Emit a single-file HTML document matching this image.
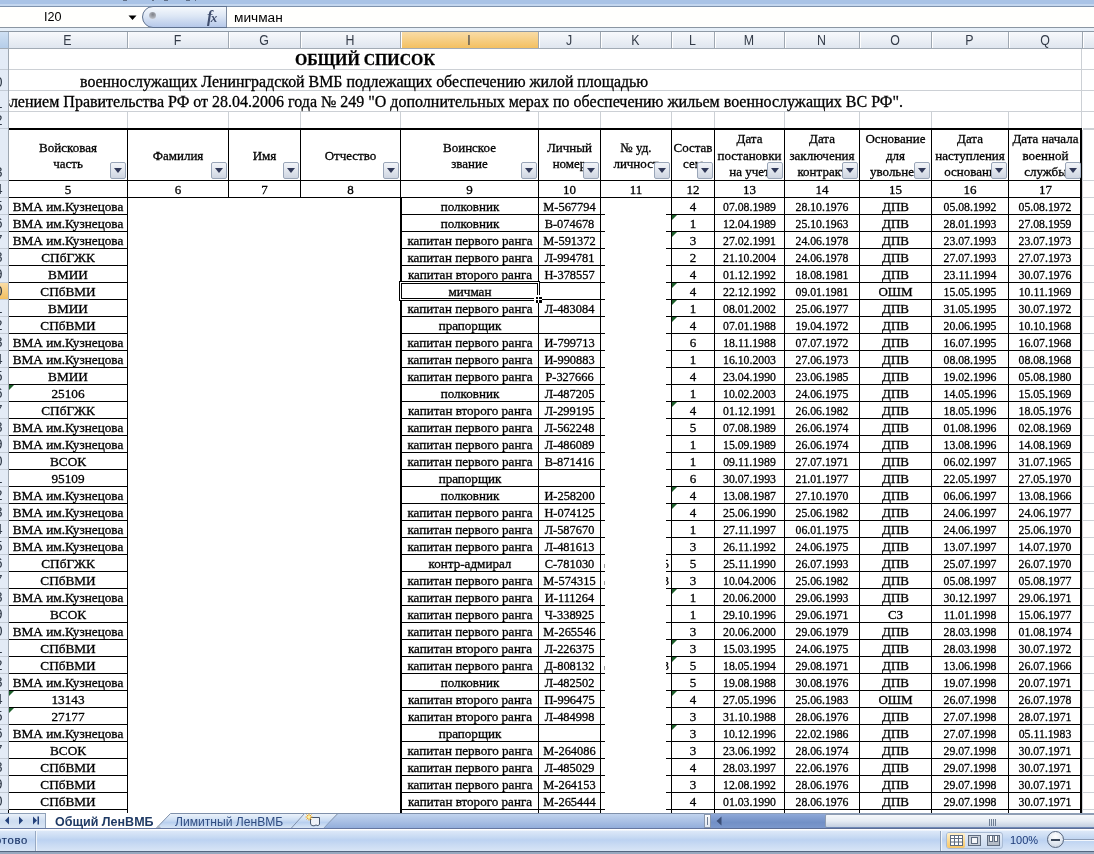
<!DOCTYPE html>
<html><head><meta charset="utf-8"><style>
html,body{margin:0;padding:0;width:1094px;height:854px;overflow:hidden;background:#fff;position:relative}
#root{position:absolute;left:0;top:0;width:1094px;height:854px;overflow:hidden;will-change:transform}
div,svg{position:absolute;box-sizing:border-box}
.serif{font-family:"Liberation Serif",serif;color:#000;white-space:nowrap;overflow:hidden;-webkit-text-stroke:0.3px #000}
.sans{font-family:"Liberation Sans",sans-serif;white-space:nowrap}
.hdr{text-align:center;white-space:nowrap;overflow:hidden}
.fbtn{width:16px;height:17px;border:1px solid #9aa6b8;border-radius:2px;background:linear-gradient(#f3f5f9,#cfd6e2)}
.fbtn::after{content:"";position:absolute;left:3px;top:5px;border-left:4.5px solid transparent;border-right:4.5px solid transparent;border-top:5px solid #303858}
.tri{width:0;height:0;border-top:5px solid #1d5f2b;border-right:5px solid transparent}
</style></head><body><div id="root">
<div style="left:0px;top:0px;width:1094px;height:4px;background:#a9c3e6"></div>
<div style="left:0px;top:4px;width:1094px;height:2px;background:#c3d6ee"></div>
<div style="left:0px;top:6px;width:1094px;height:1px;background:#7f93ad"></div>
<div style="left:0px;top:7px;width:1094px;height:20px;background:#fffffd"></div>
<div style="left:0px;top:27px;width:1094px;height:1px;background:#8b96a2"></div>
<div style="left:0px;top:28px;width:1094px;height:3px;background:#e6eff8"></div>
<div style="left:0px;top:31px;width:1094px;height:1px;background:#8e99a5"></div>
<div style="left:123px;top:0px;width:4px;height:1px;background:#5f6f88"></div>
<div style="left:152px;top:0px;width:2px;height:1px;background:#5f6f88"></div>
<div style="left:164px;top:0px;width:4px;height:1px;background:#5f6f88"></div>
<div style="left:186px;top:0px;width:4px;height:1px;background:#5f6f88"></div>
<div style="left:195px;top:0px;width:1px;height:1px;background:#5f6f88"></div>
<div class="sans" style="left:44px;top:7px;width:40px;height:20px;line-height:20px;font-size:12.6px;text-align:left;color:#000">I20</div>
<svg style="left:128px;top:15px;width:10px;height:6px" width="10" height="6"><path d="M0.5 0.5 L8.5 0.5 L4.5 5 Z" fill="#000"/></svg>
<svg style="left:141px;top:6px;width:86px;height:22px" width="86" height="22"><defs><linearGradient id="pg" x1="0" y1="0" x2="0" y2="1"><stop offset="0" stop-color="#f7fafd"/><stop offset="0.45" stop-color="#dde7f5"/><stop offset="1" stop-color="#b4c7e9"/></linearGradient></defs><path d="M12 0.5 H86 V21.5 H12 A10.5 10.5 0 0 1 12 0.5 Z" fill="url(#pg)" stroke="#5f7290" stroke-width="1"/></svg>
<div style="left:149px;top:12px;width:7px;height:7px;border-radius:50%;background:radial-gradient(circle at 55% 35%,#7d8088,#b0b4bc 60%,#e6e9ee)"></div>
<div style="left:226px;top:7px;width:1px;height:20px;background:#7d8ba0"></div>
<div class="serif" style="left:207px;top:7px;width:20px;height:20px;line-height:20px;font-size:16px;font-style:italic;font-weight:bold;color:#3f4d6d;-webkit-text-stroke:0">f<span style="font-size:13px;position:relative;left:-1.5px">x</span></div>
<div class="sans" style="left:234px;top:8px;width:200px;height:20px;line-height:20px;font-size:13.7px;color:#000">мичман</div>
<div style="left:0px;top:32px;width:1094px;height:16px;background:linear-gradient(#f7f9fc,#dfe6ef)"></div>
<div style="left:400px;top:32px;width:138px;height:16px;background:linear-gradient(#f9dca6,#f3c061)"></div>
<div style="left:0px;top:48px;width:1094px;height:1px;background:#a2abb5"></div>
<div style="left:0px;top:32px;width:8px;height:16px;background:linear-gradient(#cfe0f3,#b5cde9)"></div>
<div style="left:8px;top:32px;width:1px;height:16px;background:#9eb0c5"></div>
<div style="left:127px;top:32px;width:1px;height:16px;background:#9ea7b1"></div>
<div style="left:128px;top:32px;width:1px;height:16px;background:#ffffff"></div>
<div class="sans" style="left:8px;top:32px;width:119px;height:16px;line-height:16px;font-size:14.4px;text-align:center;color:#333b48;transform:scaleX(0.86)">E</div>
<div style="left:228px;top:32px;width:1px;height:16px;background:#9ea7b1"></div>
<div style="left:229px;top:32px;width:1px;height:16px;background:#ffffff"></div>
<div class="sans" style="left:127px;top:32px;width:101px;height:16px;line-height:16px;font-size:14.4px;text-align:center;color:#333b48;transform:scaleX(0.86)">F</div>
<div style="left:300px;top:32px;width:1px;height:16px;background:#9ea7b1"></div>
<div style="left:301px;top:32px;width:1px;height:16px;background:#ffffff"></div>
<div class="sans" style="left:228px;top:32px;width:72px;height:16px;line-height:16px;font-size:14.4px;text-align:center;color:#333b48;transform:scaleX(0.86)">G</div>
<div style="left:400px;top:32px;width:1px;height:16px;background:#9ea7b1"></div>
<div style="left:401px;top:32px;width:1px;height:16px;background:#ffffff"></div>
<div class="sans" style="left:300px;top:32px;width:100px;height:16px;line-height:16px;font-size:14.4px;text-align:center;color:#333b48;transform:scaleX(0.86)">H</div>
<div style="left:538px;top:32px;width:1px;height:16px;background:#9ea7b1"></div>
<div style="left:539px;top:32px;width:1px;height:16px;background:#ffffff"></div>
<div class="sans" style="left:400px;top:32px;width:138px;height:16px;line-height:16px;font-size:14.4px;text-align:center;color:#333b48;transform:scaleX(0.86)">I</div>
<div style="left:600px;top:32px;width:1px;height:16px;background:#9ea7b1"></div>
<div style="left:601px;top:32px;width:1px;height:16px;background:#ffffff"></div>
<div class="sans" style="left:538px;top:32px;width:62px;height:16px;line-height:16px;font-size:14.4px;text-align:center;color:#333b48;transform:scaleX(0.86)">J</div>
<div style="left:671px;top:32px;width:1px;height:16px;background:#9ea7b1"></div>
<div style="left:672px;top:32px;width:1px;height:16px;background:#ffffff"></div>
<div class="sans" style="left:600px;top:32px;width:71px;height:16px;line-height:16px;font-size:14.4px;text-align:center;color:#333b48;transform:scaleX(0.86)">K</div>
<div style="left:714px;top:32px;width:1px;height:16px;background:#9ea7b1"></div>
<div style="left:715px;top:32px;width:1px;height:16px;background:#ffffff"></div>
<div class="sans" style="left:671px;top:32px;width:43px;height:16px;line-height:16px;font-size:14.4px;text-align:center;color:#333b48;transform:scaleX(0.86)">L</div>
<div style="left:784px;top:32px;width:1px;height:16px;background:#9ea7b1"></div>
<div style="left:785px;top:32px;width:1px;height:16px;background:#ffffff"></div>
<div class="sans" style="left:714px;top:32px;width:70px;height:16px;line-height:16px;font-size:14.4px;text-align:center;color:#333b48;transform:scaleX(0.86)">M</div>
<div style="left:859px;top:32px;width:1px;height:16px;background:#9ea7b1"></div>
<div style="left:860px;top:32px;width:1px;height:16px;background:#ffffff"></div>
<div class="sans" style="left:784px;top:32px;width:75px;height:16px;line-height:16px;font-size:14.4px;text-align:center;color:#333b48;transform:scaleX(0.86)">N</div>
<div style="left:931px;top:32px;width:1px;height:16px;background:#9ea7b1"></div>
<div style="left:932px;top:32px;width:1px;height:16px;background:#ffffff"></div>
<div class="sans" style="left:859px;top:32px;width:72px;height:16px;line-height:16px;font-size:14.4px;text-align:center;color:#333b48;transform:scaleX(0.86)">O</div>
<div style="left:1008px;top:32px;width:1px;height:16px;background:#9ea7b1"></div>
<div style="left:1009px;top:32px;width:1px;height:16px;background:#ffffff"></div>
<div class="sans" style="left:931px;top:32px;width:77px;height:16px;line-height:16px;font-size:14.4px;text-align:center;color:#333b48;transform:scaleX(0.86)">P</div>
<div style="left:1082px;top:32px;width:1px;height:16px;background:#9ea7b1"></div>
<div style="left:1083px;top:32px;width:1px;height:16px;background:#ffffff"></div>
<div class="sans" style="left:1008px;top:32px;width:74px;height:16px;line-height:16px;font-size:14.4px;text-align:center;color:#333b48;transform:scaleX(0.86)">Q</div>
<div style="left:9px;top:69px;width:1085px;height:1px;background:#ccd0d5"></div>
<div style="left:9px;top:90px;width:1085px;height:1px;background:#ccd0d5"></div>
<div style="left:9px;top:111px;width:1085px;height:1px;background:#ccd0d5"></div>
<div style="left:127px;top:112px;width:1px;height:16px;background:#ccd0d5"></div>
<div style="left:228px;top:112px;width:1px;height:16px;background:#ccd0d5"></div>
<div style="left:300px;top:112px;width:1px;height:16px;background:#ccd0d5"></div>
<div style="left:400px;top:112px;width:1px;height:16px;background:#ccd0d5"></div>
<div style="left:538px;top:112px;width:1px;height:16px;background:#ccd0d5"></div>
<div style="left:600px;top:112px;width:1px;height:16px;background:#ccd0d5"></div>
<div style="left:671px;top:112px;width:1px;height:16px;background:#ccd0d5"></div>
<div style="left:714px;top:112px;width:1px;height:16px;background:#ccd0d5"></div>
<div style="left:784px;top:112px;width:1px;height:16px;background:#ccd0d5"></div>
<div style="left:859px;top:112px;width:1px;height:16px;background:#ccd0d5"></div>
<div style="left:931px;top:112px;width:1px;height:16px;background:#ccd0d5"></div>
<div style="left:1008px;top:112px;width:1px;height:16px;background:#ccd0d5"></div>
<div style="left:1081px;top:49px;width:1px;height:79px;background:#ccd0d5"></div>
<div style="left:1082px;top:130px;width:1px;height:683px;background:#ccd0d5"></div>
<div style="left:1083px;top:128px;width:11px;height:1px;background:#ccd0d5"></div>
<div style="left:1083px;top:129px;width:11px;height:1px;background:#ccd0d5"></div>
<div style="left:1083px;top:180px;width:11px;height:1px;background:#ccd0d5"></div>
<div style="left:1083px;top:197px;width:11px;height:1px;background:#ccd0d5"></div>
<div style="left:1083px;top:214px;width:11px;height:1px;background:#ccd0d5"></div>
<div style="left:1083px;top:231px;width:11px;height:1px;background:#ccd0d5"></div>
<div style="left:1083px;top:248px;width:11px;height:1px;background:#ccd0d5"></div>
<div style="left:1083px;top:265px;width:11px;height:1px;background:#ccd0d5"></div>
<div style="left:1083px;top:282px;width:11px;height:1px;background:#ccd0d5"></div>
<div style="left:1083px;top:299px;width:11px;height:1px;background:#ccd0d5"></div>
<div style="left:1083px;top:316px;width:11px;height:1px;background:#ccd0d5"></div>
<div style="left:1083px;top:333px;width:11px;height:1px;background:#ccd0d5"></div>
<div style="left:1083px;top:350px;width:11px;height:1px;background:#ccd0d5"></div>
<div style="left:1083px;top:367px;width:11px;height:1px;background:#ccd0d5"></div>
<div style="left:1083px;top:384px;width:11px;height:1px;background:#ccd0d5"></div>
<div style="left:1083px;top:401px;width:11px;height:1px;background:#ccd0d5"></div>
<div style="left:1083px;top:418px;width:11px;height:1px;background:#ccd0d5"></div>
<div style="left:1083px;top:435px;width:11px;height:1px;background:#ccd0d5"></div>
<div style="left:1083px;top:452px;width:11px;height:1px;background:#ccd0d5"></div>
<div style="left:1083px;top:469px;width:11px;height:1px;background:#ccd0d5"></div>
<div style="left:1083px;top:486px;width:11px;height:1px;background:#ccd0d5"></div>
<div style="left:1083px;top:503px;width:11px;height:1px;background:#ccd0d5"></div>
<div style="left:1083px;top:520px;width:11px;height:1px;background:#ccd0d5"></div>
<div style="left:1083px;top:537px;width:11px;height:1px;background:#ccd0d5"></div>
<div style="left:1083px;top:554px;width:11px;height:1px;background:#ccd0d5"></div>
<div style="left:1083px;top:571px;width:11px;height:1px;background:#ccd0d5"></div>
<div style="left:1083px;top:588px;width:11px;height:1px;background:#ccd0d5"></div>
<div style="left:1083px;top:605px;width:11px;height:1px;background:#ccd0d5"></div>
<div style="left:1083px;top:622px;width:11px;height:1px;background:#ccd0d5"></div>
<div style="left:1083px;top:639px;width:11px;height:1px;background:#ccd0d5"></div>
<div style="left:1083px;top:656px;width:11px;height:1px;background:#ccd0d5"></div>
<div style="left:1083px;top:673px;width:11px;height:1px;background:#ccd0d5"></div>
<div style="left:1083px;top:690px;width:11px;height:1px;background:#ccd0d5"></div>
<div style="left:1083px;top:707px;width:11px;height:1px;background:#ccd0d5"></div>
<div style="left:1083px;top:724px;width:11px;height:1px;background:#ccd0d5"></div>
<div style="left:1083px;top:741px;width:11px;height:1px;background:#ccd0d5"></div>
<div style="left:1083px;top:758px;width:11px;height:1px;background:#ccd0d5"></div>
<div style="left:1083px;top:775px;width:11px;height:1px;background:#ccd0d5"></div>
<div style="left:1083px;top:792px;width:11px;height:1px;background:#ccd0d5"></div>
<div style="left:1083px;top:809px;width:11px;height:1px;background:#ccd0d5"></div>
<div class="serif" style="left:295px;top:50px;width:200px;height:20px;line-height:20px;font-size:17px;font-weight:bold;text-align:left;transform:scaleX(0.93);transform-origin:0 50%">ОБЩИЙ СПИСОК</div>
<div class="serif" style="left:80px;top:71.5px;width:700px;height:20px;line-height:20px;font-size:15.9px;text-align:left">военнослужащих Ленинградской ВМБ подлежащих обеспечению жилой площадью</div>
<div class="serif" style="left:-200px;top:91px;width:1300px;height:20px;line-height:20px;font-size:16px;text-align:right;width:1103px;left:-200px;top:92px">в соответствии с постановлением Правительства РФ от 28.04.2006 года № 249 "О дополнительных мерах по обеспечению жильем военнослужащих ВС РФ".</div>
<div style="left:8px;top:128px;width:1074px;height:2px;background:#000"></div>
<div style="left:8px;top:180px;width:1074px;height:1px;background:#000"></div>
<div style="left:8px;top:197px;width:1074px;height:1px;background:#000"></div>
<div style="left:8px;top:130px;width:1px;height:67px;background:#000"></div>
<div style="left:127px;top:130px;width:1px;height:67px;background:#000"></div>
<div style="left:228px;top:130px;width:1px;height:67px;background:#000"></div>
<div style="left:300px;top:130px;width:1px;height:67px;background:#000"></div>
<div style="left:400px;top:130px;width:1px;height:67px;background:#000"></div>
<div style="left:538px;top:130px;width:1px;height:67px;background:#000"></div>
<div style="left:600px;top:130px;width:1px;height:67px;background:#000"></div>
<div style="left:671px;top:130px;width:1px;height:67px;background:#000"></div>
<div style="left:714px;top:130px;width:1px;height:67px;background:#000"></div>
<div style="left:784px;top:130px;width:1px;height:67px;background:#000"></div>
<div style="left:859px;top:130px;width:1px;height:67px;background:#000"></div>
<div style="left:931px;top:130px;width:1px;height:67px;background:#000"></div>
<div style="left:1008px;top:130px;width:1px;height:67px;background:#000"></div>
<div style="left:1080px;top:128px;width:2px;height:685px;background:#000"></div>
<div class="serif hdr" style="left:9px;top:139.5px;width:118px;line-height:16.5px;font-size:13px">Войсковая<br>часть</div>
<div class="fbtn" style="left:110px;top:162px"></div>
<div class="serif hdr" style="left:128px;top:147.75px;width:100px;line-height:16.5px;font-size:13px">Фамилия</div>
<div class="fbtn" style="left:211px;top:162px"></div>
<div class="serif hdr" style="left:229px;top:147.75px;width:71px;line-height:16.5px;font-size:13px">Имя</div>
<div class="fbtn" style="left:283px;top:162px"></div>
<div class="serif hdr" style="left:301px;top:147.75px;width:99px;line-height:16.5px;font-size:13px">Отчество</div>
<div class="fbtn" style="left:383px;top:162px"></div>
<div class="serif hdr" style="left:401px;top:139.5px;width:137px;line-height:16.5px;font-size:13px">Воинское<br>звание</div>
<div class="fbtn" style="left:521px;top:162px"></div>
<div class="serif hdr" style="left:539px;top:139.5px;width:61px;line-height:16.5px;font-size:13px">Личный<br>номер</div>
<div class="fbtn" style="left:583px;top:162px"></div>
<div class="serif hdr" style="left:601px;top:139.5px;width:70px;line-height:16.5px;font-size:13px">№ уд.<br>личност</div>
<div class="fbtn" style="left:654px;top:162px"></div>
<div class="serif hdr" style="left:672px;top:139.5px;width:42px;line-height:16.5px;font-size:13px">Состав<br>сем</div>
<div class="fbtn" style="left:697px;top:162px"></div>
<div class="serif hdr" style="left:715px;top:131.25px;width:69px;line-height:16.5px;font-size:13px">Дата<br>постановки<br>на учет</div>
<div class="fbtn" style="left:767px;top:162px"></div>
<div class="serif hdr" style="left:785px;top:131.25px;width:74px;line-height:16.5px;font-size:13px">Дата<br>заключения<br>контракт</div>
<div class="fbtn" style="left:842px;top:162px"></div>
<div class="serif hdr" style="left:860px;top:131.25px;width:71px;line-height:16.5px;font-size:13px">Основание<br>для<br>увольнен</div>
<div class="fbtn" style="left:914px;top:162px"></div>
<div class="serif hdr" style="left:932px;top:131.25px;width:76px;line-height:16.5px;font-size:13px">Дата<br>наступления<br>основани</div>
<div class="fbtn" style="left:991px;top:162px"></div>
<div class="serif hdr" style="left:1009px;top:131.25px;width:73px;line-height:16.5px;font-size:13px">Дата начала<br>военной<br>службы</div>
<div class="fbtn" style="left:1065px;top:162px"></div>
<div class="serif" style="left:9px;top:182px;width:118px;height:16px;line-height:16px;font-size:13px;text-align:center">5</div>
<div class="serif" style="left:128px;top:182px;width:100px;height:16px;line-height:16px;font-size:13px;text-align:center">6</div>
<div class="serif" style="left:229px;top:182px;width:71px;height:16px;line-height:16px;font-size:13px;text-align:center">7</div>
<div class="serif" style="left:301px;top:182px;width:99px;height:16px;line-height:16px;font-size:13px;text-align:center">8</div>
<div class="serif" style="left:401px;top:182px;width:137px;height:16px;line-height:16px;font-size:13px;text-align:center">9</div>
<div class="serif" style="left:539px;top:182px;width:61px;height:16px;line-height:16px;font-size:13px;text-align:center">10</div>
<div class="serif" style="left:601px;top:182px;width:70px;height:16px;line-height:16px;font-size:13px;text-align:center">11</div>
<div class="serif" style="left:672px;top:182px;width:42px;height:16px;line-height:16px;font-size:13px;text-align:center">12</div>
<div class="serif" style="left:715px;top:182px;width:69px;height:16px;line-height:16px;font-size:13px;text-align:center">13</div>
<div class="serif" style="left:785px;top:182px;width:74px;height:16px;line-height:16px;font-size:13px;text-align:center">14</div>
<div class="serif" style="left:860px;top:182px;width:71px;height:16px;line-height:16px;font-size:13px;text-align:center">15</div>
<div class="serif" style="left:932px;top:182px;width:76px;height:16px;line-height:16px;font-size:13px;text-align:center">16</div>
<div class="serif" style="left:1009px;top:182px;width:73px;height:16px;line-height:16px;font-size:13px;text-align:center">17</div>
<div style="left:8px;top:214px;width:119px;height:1px;background:#000"></div>
<div style="left:400px;top:214px;width:205px;height:1px;background:#000"></div>
<div style="left:666px;top:214px;width:416px;height:1px;background:#000"></div>
<div class="serif" style="left:9px;top:199px;width:118px;height:16px;line-height:16px;font-size:13.25px;text-align:center">ВМА им.Кузнецова</div>
<div class="serif" style="left:402px;top:199px;width:136px;height:16px;line-height:16px;font-size:13.1px;text-align:center">полковник</div>
<div class="serif" style="left:539px;top:199px;width:61px;height:16px;line-height:16px;font-size:12.4px;text-align:center">М-567794</div>
<div class="serif" style="left:672px;top:199px;width:42px;height:16px;line-height:16px;font-size:13px;text-align:center">4</div>
<div class="serif" style="left:715px;top:199px;width:69px;height:16px;line-height:16px;font-size:13px;text-align:center;transform:scaleX(0.906)">07.08.1989</div>
<div class="serif" style="left:785px;top:199px;width:74px;height:16px;line-height:16px;font-size:13px;text-align:center;transform:scaleX(0.906)">28.10.1976</div>
<div class="serif" style="left:860px;top:199px;width:71px;height:16px;line-height:16px;font-size:13px;text-align:center">ДПВ</div>
<div class="serif" style="left:932px;top:199px;width:76px;height:16px;line-height:16px;font-size:13px;text-align:center;transform:scaleX(0.906)">05.08.1992</div>
<div class="serif" style="left:1009px;top:199px;width:72px;height:16px;line-height:16px;font-size:13px;text-align:center;transform:scaleX(0.906)">05.08.1972</div>
<div style="left:8px;top:231px;width:119px;height:1px;background:#000"></div>
<div style="left:400px;top:231px;width:205px;height:1px;background:#000"></div>
<div style="left:666px;top:231px;width:416px;height:1px;background:#000"></div>
<div class="serif" style="left:9px;top:216px;width:118px;height:16px;line-height:16px;font-size:13.25px;text-align:center">ВМА им.Кузнецова</div>
<div class="serif" style="left:402px;top:216px;width:136px;height:16px;line-height:16px;font-size:13.1px;text-align:center">полковник</div>
<div class="serif" style="left:539px;top:216px;width:61px;height:16px;line-height:16px;font-size:12.4px;text-align:center">В-074678</div>
<div class="serif" style="left:672px;top:216px;width:42px;height:16px;line-height:16px;font-size:13px;text-align:center">1</div>
<div class="serif" style="left:715px;top:216px;width:69px;height:16px;line-height:16px;font-size:13px;text-align:center;transform:scaleX(0.906)">12.04.1989</div>
<div class="serif" style="left:785px;top:216px;width:74px;height:16px;line-height:16px;font-size:13px;text-align:center;transform:scaleX(0.906)">25.10.1963</div>
<div class="serif" style="left:860px;top:216px;width:71px;height:16px;line-height:16px;font-size:13px;text-align:center">ДПВ</div>
<div class="serif" style="left:932px;top:216px;width:76px;height:16px;line-height:16px;font-size:13px;text-align:center;transform:scaleX(0.906)">28.01.1993</div>
<div class="serif" style="left:1009px;top:216px;width:72px;height:16px;line-height:16px;font-size:13px;text-align:center;transform:scaleX(0.906)">27.08.1959</div>
<div class="tri" style="left:672px;top:215px"></div>
<div style="left:8px;top:248px;width:119px;height:1px;background:#000"></div>
<div style="left:400px;top:248px;width:205px;height:1px;background:#000"></div>
<div style="left:666px;top:248px;width:416px;height:1px;background:#000"></div>
<div class="serif" style="left:9px;top:233px;width:118px;height:16px;line-height:16px;font-size:13.25px;text-align:center">ВМА им.Кузнецова</div>
<div class="serif" style="left:402px;top:233px;width:136px;height:16px;line-height:16px;font-size:13.1px;text-align:center">капитан первого ранга</div>
<div class="serif" style="left:539px;top:233px;width:61px;height:16px;line-height:16px;font-size:12.4px;text-align:center">М-591372</div>
<div class="serif" style="left:672px;top:233px;width:42px;height:16px;line-height:16px;font-size:13px;text-align:center">3</div>
<div class="serif" style="left:715px;top:233px;width:69px;height:16px;line-height:16px;font-size:13px;text-align:center;transform:scaleX(0.906)">27.02.1991</div>
<div class="serif" style="left:785px;top:233px;width:74px;height:16px;line-height:16px;font-size:13px;text-align:center;transform:scaleX(0.906)">24.06.1978</div>
<div class="serif" style="left:860px;top:233px;width:71px;height:16px;line-height:16px;font-size:13px;text-align:center">ДПВ</div>
<div class="serif" style="left:932px;top:233px;width:76px;height:16px;line-height:16px;font-size:13px;text-align:center;transform:scaleX(0.906)">23.07.1993</div>
<div class="serif" style="left:1009px;top:233px;width:72px;height:16px;line-height:16px;font-size:13px;text-align:center;transform:scaleX(0.906)">23.07.1973</div>
<div class="tri" style="left:672px;top:232px"></div>
<div style="left:8px;top:265px;width:119px;height:1px;background:#000"></div>
<div style="left:400px;top:265px;width:205px;height:1px;background:#000"></div>
<div style="left:666px;top:265px;width:416px;height:1px;background:#000"></div>
<div class="serif" style="left:9px;top:250px;width:118px;height:16px;line-height:16px;font-size:13.25px;text-align:center">СПбГЖК</div>
<div class="serif" style="left:402px;top:250px;width:136px;height:16px;line-height:16px;font-size:13.1px;text-align:center">капитан первого ранга</div>
<div class="serif" style="left:539px;top:250px;width:61px;height:16px;line-height:16px;font-size:12.4px;text-align:center">Л-994781</div>
<div class="serif" style="left:672px;top:250px;width:42px;height:16px;line-height:16px;font-size:13px;text-align:center">2</div>
<div class="serif" style="left:715px;top:250px;width:69px;height:16px;line-height:16px;font-size:13px;text-align:center;transform:scaleX(0.906)">21.10.2004</div>
<div class="serif" style="left:785px;top:250px;width:74px;height:16px;line-height:16px;font-size:13px;text-align:center;transform:scaleX(0.906)">24.06.1978</div>
<div class="serif" style="left:860px;top:250px;width:71px;height:16px;line-height:16px;font-size:13px;text-align:center">ДПВ</div>
<div class="serif" style="left:932px;top:250px;width:76px;height:16px;line-height:16px;font-size:13px;text-align:center;transform:scaleX(0.906)">27.07.1993</div>
<div class="serif" style="left:1009px;top:250px;width:72px;height:16px;line-height:16px;font-size:13px;text-align:center;transform:scaleX(0.906)">27.07.1973</div>
<div style="left:8px;top:282px;width:119px;height:1px;background:#000"></div>
<div style="left:400px;top:282px;width:205px;height:1px;background:#000"></div>
<div style="left:666px;top:282px;width:416px;height:1px;background:#000"></div>
<div class="serif" style="left:9px;top:267px;width:118px;height:16px;line-height:16px;font-size:13.25px;text-align:center">ВМИИ</div>
<div class="serif" style="left:402px;top:267px;width:136px;height:16px;line-height:16px;font-size:13.1px;text-align:center">капитан второго ранга</div>
<div class="serif" style="left:539px;top:267px;width:61px;height:16px;line-height:16px;font-size:12.4px;text-align:center">Н-378557</div>
<div class="serif" style="left:672px;top:267px;width:42px;height:16px;line-height:16px;font-size:13px;text-align:center">4</div>
<div class="serif" style="left:715px;top:267px;width:69px;height:16px;line-height:16px;font-size:13px;text-align:center;transform:scaleX(0.906)">01.12.1992</div>
<div class="serif" style="left:785px;top:267px;width:74px;height:16px;line-height:16px;font-size:13px;text-align:center;transform:scaleX(0.906)">18.08.1981</div>
<div class="serif" style="left:860px;top:267px;width:71px;height:16px;line-height:16px;font-size:13px;text-align:center">ДПВ</div>
<div class="serif" style="left:932px;top:267px;width:76px;height:16px;line-height:16px;font-size:13px;text-align:center;transform:scaleX(0.906)">23.11.1994</div>
<div class="serif" style="left:1009px;top:267px;width:72px;height:16px;line-height:16px;font-size:13px;text-align:center;transform:scaleX(0.906)">30.07.1976</div>
<div style="left:8px;top:299px;width:119px;height:1px;background:#000"></div>
<div style="left:400px;top:299px;width:205px;height:1px;background:#000"></div>
<div style="left:666px;top:299px;width:416px;height:1px;background:#000"></div>
<div class="serif" style="left:9px;top:284px;width:118px;height:16px;line-height:16px;font-size:13.25px;text-align:center">СПбВМИ</div>
<div class="serif" style="left:402px;top:284px;width:136px;height:16px;line-height:16px;font-size:13.1px;text-align:center">мичман</div>
<div class="serif" style="left:539px;top:284px;width:61px;height:16px;line-height:16px;font-size:12.4px;text-align:center"></div>
<div class="serif" style="left:672px;top:284px;width:42px;height:16px;line-height:16px;font-size:13px;text-align:center">4</div>
<div class="serif" style="left:715px;top:284px;width:69px;height:16px;line-height:16px;font-size:13px;text-align:center;transform:scaleX(0.906)">22.12.1992</div>
<div class="serif" style="left:785px;top:284px;width:74px;height:16px;line-height:16px;font-size:13px;text-align:center;transform:scaleX(0.906)">09.01.1981</div>
<div class="serif" style="left:860px;top:284px;width:71px;height:16px;line-height:16px;font-size:13px;text-align:center">ОШМ</div>
<div class="serif" style="left:932px;top:284px;width:76px;height:16px;line-height:16px;font-size:13px;text-align:center;transform:scaleX(0.906)">15.05.1995</div>
<div class="serif" style="left:1009px;top:284px;width:72px;height:16px;line-height:16px;font-size:13px;text-align:center;transform:scaleX(0.906)">10.11.1969</div>
<div class="tri" style="left:672px;top:283px"></div>
<div style="left:8px;top:316px;width:119px;height:1px;background:#000"></div>
<div style="left:400px;top:316px;width:205px;height:1px;background:#000"></div>
<div style="left:666px;top:316px;width:416px;height:1px;background:#000"></div>
<div class="serif" style="left:9px;top:301px;width:118px;height:16px;line-height:16px;font-size:13.25px;text-align:center">ВМИИ</div>
<div class="serif" style="left:402px;top:301px;width:136px;height:16px;line-height:16px;font-size:13.1px;text-align:center">капитан первого ранга</div>
<div class="serif" style="left:539px;top:301px;width:61px;height:16px;line-height:16px;font-size:12.4px;text-align:center">Л-483084</div>
<div class="serif" style="left:672px;top:301px;width:42px;height:16px;line-height:16px;font-size:13px;text-align:center">1</div>
<div class="serif" style="left:715px;top:301px;width:69px;height:16px;line-height:16px;font-size:13px;text-align:center;transform:scaleX(0.906)">08.01.2002</div>
<div class="serif" style="left:785px;top:301px;width:74px;height:16px;line-height:16px;font-size:13px;text-align:center;transform:scaleX(0.906)">25.06.1977</div>
<div class="serif" style="left:860px;top:301px;width:71px;height:16px;line-height:16px;font-size:13px;text-align:center">ДПВ</div>
<div class="serif" style="left:932px;top:301px;width:76px;height:16px;line-height:16px;font-size:13px;text-align:center;transform:scaleX(0.906)">31.05.1995</div>
<div class="serif" style="left:1009px;top:301px;width:72px;height:16px;line-height:16px;font-size:13px;text-align:center;transform:scaleX(0.906)">30.07.1972</div>
<div class="tri" style="left:672px;top:300px"></div>
<div style="left:8px;top:333px;width:119px;height:1px;background:#000"></div>
<div style="left:400px;top:333px;width:205px;height:1px;background:#000"></div>
<div style="left:666px;top:333px;width:416px;height:1px;background:#000"></div>
<div class="serif" style="left:9px;top:318px;width:118px;height:16px;line-height:16px;font-size:13.25px;text-align:center">СПбВМИ</div>
<div class="serif" style="left:402px;top:318px;width:136px;height:16px;line-height:16px;font-size:13.1px;text-align:center">прапорщик</div>
<div class="serif" style="left:539px;top:318px;width:61px;height:16px;line-height:16px;font-size:12.4px;text-align:center"></div>
<div class="serif" style="left:672px;top:318px;width:42px;height:16px;line-height:16px;font-size:13px;text-align:center">4</div>
<div class="serif" style="left:715px;top:318px;width:69px;height:16px;line-height:16px;font-size:13px;text-align:center;transform:scaleX(0.906)">07.01.1988</div>
<div class="serif" style="left:785px;top:318px;width:74px;height:16px;line-height:16px;font-size:13px;text-align:center;transform:scaleX(0.906)">19.04.1972</div>
<div class="serif" style="left:860px;top:318px;width:71px;height:16px;line-height:16px;font-size:13px;text-align:center">ДПВ</div>
<div class="serif" style="left:932px;top:318px;width:76px;height:16px;line-height:16px;font-size:13px;text-align:center;transform:scaleX(0.906)">20.06.1995</div>
<div class="serif" style="left:1009px;top:318px;width:72px;height:16px;line-height:16px;font-size:13px;text-align:center;transform:scaleX(0.906)">10.10.1968</div>
<div class="tri" style="left:672px;top:317px"></div>
<div style="left:8px;top:350px;width:119px;height:1px;background:#000"></div>
<div style="left:400px;top:350px;width:205px;height:1px;background:#000"></div>
<div style="left:666px;top:350px;width:416px;height:1px;background:#000"></div>
<div class="serif" style="left:9px;top:335px;width:118px;height:16px;line-height:16px;font-size:13.25px;text-align:center">ВМА им.Кузнецова</div>
<div class="serif" style="left:402px;top:335px;width:136px;height:16px;line-height:16px;font-size:13.1px;text-align:center">капитан первого ранга</div>
<div class="serif" style="left:539px;top:335px;width:61px;height:16px;line-height:16px;font-size:12.4px;text-align:center">И-799713</div>
<div class="serif" style="left:672px;top:335px;width:42px;height:16px;line-height:16px;font-size:13px;text-align:center">6</div>
<div class="serif" style="left:715px;top:335px;width:69px;height:16px;line-height:16px;font-size:13px;text-align:center;transform:scaleX(0.906)">18.11.1988</div>
<div class="serif" style="left:785px;top:335px;width:74px;height:16px;line-height:16px;font-size:13px;text-align:center;transform:scaleX(0.906)">07.07.1972</div>
<div class="serif" style="left:860px;top:335px;width:71px;height:16px;line-height:16px;font-size:13px;text-align:center">ДПВ</div>
<div class="serif" style="left:932px;top:335px;width:76px;height:16px;line-height:16px;font-size:13px;text-align:center;transform:scaleX(0.906)">16.07.1995</div>
<div class="serif" style="left:1009px;top:335px;width:72px;height:16px;line-height:16px;font-size:13px;text-align:center;transform:scaleX(0.906)">16.07.1968</div>
<div style="left:8px;top:367px;width:119px;height:1px;background:#000"></div>
<div style="left:400px;top:367px;width:205px;height:1px;background:#000"></div>
<div style="left:666px;top:367px;width:416px;height:1px;background:#000"></div>
<div class="serif" style="left:9px;top:352px;width:118px;height:16px;line-height:16px;font-size:13.25px;text-align:center">ВМА им.Кузнецова</div>
<div class="serif" style="left:402px;top:352px;width:136px;height:16px;line-height:16px;font-size:13.1px;text-align:center">капитан первого ранга</div>
<div class="serif" style="left:539px;top:352px;width:61px;height:16px;line-height:16px;font-size:12.4px;text-align:center">И-990883</div>
<div class="serif" style="left:672px;top:352px;width:42px;height:16px;line-height:16px;font-size:13px;text-align:center">1</div>
<div class="serif" style="left:715px;top:352px;width:69px;height:16px;line-height:16px;font-size:13px;text-align:center;transform:scaleX(0.906)">16.10.2003</div>
<div class="serif" style="left:785px;top:352px;width:74px;height:16px;line-height:16px;font-size:13px;text-align:center;transform:scaleX(0.906)">27.06.1973</div>
<div class="serif" style="left:860px;top:352px;width:71px;height:16px;line-height:16px;font-size:13px;text-align:center">ДПВ</div>
<div class="serif" style="left:932px;top:352px;width:76px;height:16px;line-height:16px;font-size:13px;text-align:center;transform:scaleX(0.906)">08.08.1995</div>
<div class="serif" style="left:1009px;top:352px;width:72px;height:16px;line-height:16px;font-size:13px;text-align:center;transform:scaleX(0.906)">08.08.1968</div>
<div style="left:8px;top:384px;width:119px;height:1px;background:#000"></div>
<div style="left:400px;top:384px;width:205px;height:1px;background:#000"></div>
<div style="left:666px;top:384px;width:416px;height:1px;background:#000"></div>
<div class="serif" style="left:9px;top:369px;width:118px;height:16px;line-height:16px;font-size:13.25px;text-align:center">ВМИИ</div>
<div class="serif" style="left:402px;top:369px;width:136px;height:16px;line-height:16px;font-size:13.1px;text-align:center">капитан первого ранга</div>
<div class="serif" style="left:539px;top:369px;width:61px;height:16px;line-height:16px;font-size:12.4px;text-align:center">Р-327666</div>
<div class="serif" style="left:672px;top:369px;width:42px;height:16px;line-height:16px;font-size:13px;text-align:center">4</div>
<div class="serif" style="left:715px;top:369px;width:69px;height:16px;line-height:16px;font-size:13px;text-align:center;transform:scaleX(0.906)">23.04.1990</div>
<div class="serif" style="left:785px;top:369px;width:74px;height:16px;line-height:16px;font-size:13px;text-align:center;transform:scaleX(0.906)">23.06.1985</div>
<div class="serif" style="left:860px;top:369px;width:71px;height:16px;line-height:16px;font-size:13px;text-align:center">ДПВ</div>
<div class="serif" style="left:932px;top:369px;width:76px;height:16px;line-height:16px;font-size:13px;text-align:center;transform:scaleX(0.906)">19.02.1996</div>
<div class="serif" style="left:1009px;top:369px;width:72px;height:16px;line-height:16px;font-size:13px;text-align:center;transform:scaleX(0.906)">05.08.1980</div>
<div style="left:8px;top:401px;width:119px;height:1px;background:#000"></div>
<div style="left:400px;top:401px;width:205px;height:1px;background:#000"></div>
<div style="left:666px;top:401px;width:416px;height:1px;background:#000"></div>
<div class="serif" style="left:9px;top:386px;width:118px;height:16px;line-height:16px;font-size:13.25px;text-align:center">25106</div>
<div class="serif" style="left:402px;top:386px;width:136px;height:16px;line-height:16px;font-size:13.1px;text-align:center">полковник</div>
<div class="serif" style="left:539px;top:386px;width:61px;height:16px;line-height:16px;font-size:12.4px;text-align:center">Л-487205</div>
<div class="serif" style="left:672px;top:386px;width:42px;height:16px;line-height:16px;font-size:13px;text-align:center">1</div>
<div class="serif" style="left:715px;top:386px;width:69px;height:16px;line-height:16px;font-size:13px;text-align:center;transform:scaleX(0.906)">10.02.2003</div>
<div class="serif" style="left:785px;top:386px;width:74px;height:16px;line-height:16px;font-size:13px;text-align:center;transform:scaleX(0.906)">24.06.1975</div>
<div class="serif" style="left:860px;top:386px;width:71px;height:16px;line-height:16px;font-size:13px;text-align:center">ДПВ</div>
<div class="serif" style="left:932px;top:386px;width:76px;height:16px;line-height:16px;font-size:13px;text-align:center;transform:scaleX(0.906)">14.05.1996</div>
<div class="serif" style="left:1009px;top:386px;width:72px;height:16px;line-height:16px;font-size:13px;text-align:center;transform:scaleX(0.906)">15.05.1969</div>
<div class="tri" style="left:9px;top:385px"></div>
<div style="left:8px;top:418px;width:119px;height:1px;background:#000"></div>
<div style="left:400px;top:418px;width:205px;height:1px;background:#000"></div>
<div style="left:666px;top:418px;width:416px;height:1px;background:#000"></div>
<div class="serif" style="left:9px;top:403px;width:118px;height:16px;line-height:16px;font-size:13.25px;text-align:center">СПбГЖК</div>
<div class="serif" style="left:402px;top:403px;width:136px;height:16px;line-height:16px;font-size:13.1px;text-align:center">капитан второго ранга</div>
<div class="serif" style="left:539px;top:403px;width:61px;height:16px;line-height:16px;font-size:12.4px;text-align:center">Л-299195</div>
<div class="serif" style="left:672px;top:403px;width:42px;height:16px;line-height:16px;font-size:13px;text-align:center">4</div>
<div class="serif" style="left:715px;top:403px;width:69px;height:16px;line-height:16px;font-size:13px;text-align:center;transform:scaleX(0.906)">01.12.1991</div>
<div class="serif" style="left:785px;top:403px;width:74px;height:16px;line-height:16px;font-size:13px;text-align:center;transform:scaleX(0.906)">26.06.1982</div>
<div class="serif" style="left:860px;top:403px;width:71px;height:16px;line-height:16px;font-size:13px;text-align:center">ДПВ</div>
<div class="serif" style="left:932px;top:403px;width:76px;height:16px;line-height:16px;font-size:13px;text-align:center;transform:scaleX(0.906)">18.05.1996</div>
<div class="serif" style="left:1009px;top:403px;width:72px;height:16px;line-height:16px;font-size:13px;text-align:center;transform:scaleX(0.906)">18.05.1976</div>
<div class="tri" style="left:672px;top:402px"></div>
<div style="left:8px;top:435px;width:119px;height:1px;background:#000"></div>
<div style="left:400px;top:435px;width:205px;height:1px;background:#000"></div>
<div style="left:666px;top:435px;width:416px;height:1px;background:#000"></div>
<div class="serif" style="left:9px;top:420px;width:118px;height:16px;line-height:16px;font-size:13.25px;text-align:center">ВМА им.Кузнецова</div>
<div class="serif" style="left:402px;top:420px;width:136px;height:16px;line-height:16px;font-size:13.1px;text-align:center">капитан первого ранга</div>
<div class="serif" style="left:539px;top:420px;width:61px;height:16px;line-height:16px;font-size:12.4px;text-align:center">Л-562248</div>
<div class="serif" style="left:672px;top:420px;width:42px;height:16px;line-height:16px;font-size:13px;text-align:center">5</div>
<div class="serif" style="left:715px;top:420px;width:69px;height:16px;line-height:16px;font-size:13px;text-align:center;transform:scaleX(0.906)">07.08.1989</div>
<div class="serif" style="left:785px;top:420px;width:74px;height:16px;line-height:16px;font-size:13px;text-align:center;transform:scaleX(0.906)">26.06.1974</div>
<div class="serif" style="left:860px;top:420px;width:71px;height:16px;line-height:16px;font-size:13px;text-align:center">ДПВ</div>
<div class="serif" style="left:932px;top:420px;width:76px;height:16px;line-height:16px;font-size:13px;text-align:center;transform:scaleX(0.906)">01.08.1996</div>
<div class="serif" style="left:1009px;top:420px;width:72px;height:16px;line-height:16px;font-size:13px;text-align:center;transform:scaleX(0.906)">02.08.1969</div>
<div style="left:8px;top:452px;width:119px;height:1px;background:#000"></div>
<div style="left:400px;top:452px;width:205px;height:1px;background:#000"></div>
<div style="left:666px;top:452px;width:416px;height:1px;background:#000"></div>
<div class="serif" style="left:9px;top:437px;width:118px;height:16px;line-height:16px;font-size:13.25px;text-align:center">ВМА им.Кузнецова</div>
<div class="serif" style="left:402px;top:437px;width:136px;height:16px;line-height:16px;font-size:13.1px;text-align:center">капитан первого ранга</div>
<div class="serif" style="left:539px;top:437px;width:61px;height:16px;line-height:16px;font-size:12.4px;text-align:center">Л-486089</div>
<div class="serif" style="left:672px;top:437px;width:42px;height:16px;line-height:16px;font-size:13px;text-align:center">1</div>
<div class="serif" style="left:715px;top:437px;width:69px;height:16px;line-height:16px;font-size:13px;text-align:center;transform:scaleX(0.906)">15.09.1989</div>
<div class="serif" style="left:785px;top:437px;width:74px;height:16px;line-height:16px;font-size:13px;text-align:center;transform:scaleX(0.906)">26.06.1974</div>
<div class="serif" style="left:860px;top:437px;width:71px;height:16px;line-height:16px;font-size:13px;text-align:center">ДПВ</div>
<div class="serif" style="left:932px;top:437px;width:76px;height:16px;line-height:16px;font-size:13px;text-align:center;transform:scaleX(0.906)">13.08.1996</div>
<div class="serif" style="left:1009px;top:437px;width:72px;height:16px;line-height:16px;font-size:13px;text-align:center;transform:scaleX(0.906)">14.08.1969</div>
<div style="left:8px;top:469px;width:119px;height:1px;background:#000"></div>
<div style="left:400px;top:469px;width:205px;height:1px;background:#000"></div>
<div style="left:666px;top:469px;width:416px;height:1px;background:#000"></div>
<div class="serif" style="left:9px;top:454px;width:118px;height:16px;line-height:16px;font-size:13.25px;text-align:center">ВСОК</div>
<div class="serif" style="left:402px;top:454px;width:136px;height:16px;line-height:16px;font-size:13.1px;text-align:center">капитан первого ранга</div>
<div class="serif" style="left:539px;top:454px;width:61px;height:16px;line-height:16px;font-size:12.4px;text-align:center">В-871416</div>
<div class="serif" style="left:672px;top:454px;width:42px;height:16px;line-height:16px;font-size:13px;text-align:center">1</div>
<div class="serif" style="left:715px;top:454px;width:69px;height:16px;line-height:16px;font-size:13px;text-align:center;transform:scaleX(0.906)">09.11.1989</div>
<div class="serif" style="left:785px;top:454px;width:74px;height:16px;line-height:16px;font-size:13px;text-align:center;transform:scaleX(0.906)">27.07.1971</div>
<div class="serif" style="left:860px;top:454px;width:71px;height:16px;line-height:16px;font-size:13px;text-align:center">ДПВ</div>
<div class="serif" style="left:932px;top:454px;width:76px;height:16px;line-height:16px;font-size:13px;text-align:center;transform:scaleX(0.906)">06.02.1997</div>
<div class="serif" style="left:1009px;top:454px;width:72px;height:16px;line-height:16px;font-size:13px;text-align:center;transform:scaleX(0.906)">31.07.1965</div>
<div style="left:8px;top:486px;width:119px;height:1px;background:#000"></div>
<div style="left:400px;top:486px;width:205px;height:1px;background:#000"></div>
<div style="left:666px;top:486px;width:416px;height:1px;background:#000"></div>
<div class="serif" style="left:9px;top:471px;width:118px;height:16px;line-height:16px;font-size:13.25px;text-align:center">95109</div>
<div class="serif" style="left:402px;top:471px;width:136px;height:16px;line-height:16px;font-size:13.1px;text-align:center">прапорщик</div>
<div class="serif" style="left:539px;top:471px;width:61px;height:16px;line-height:16px;font-size:12.4px;text-align:center"></div>
<div class="serif" style="left:672px;top:471px;width:42px;height:16px;line-height:16px;font-size:13px;text-align:center">6</div>
<div class="serif" style="left:715px;top:471px;width:69px;height:16px;line-height:16px;font-size:13px;text-align:center;transform:scaleX(0.906)">30.07.1993</div>
<div class="serif" style="left:785px;top:471px;width:74px;height:16px;line-height:16px;font-size:13px;text-align:center;transform:scaleX(0.906)">21.01.1977</div>
<div class="serif" style="left:860px;top:471px;width:71px;height:16px;line-height:16px;font-size:13px;text-align:center">ДПВ</div>
<div class="serif" style="left:932px;top:471px;width:76px;height:16px;line-height:16px;font-size:13px;text-align:center;transform:scaleX(0.906)">22.05.1997</div>
<div class="serif" style="left:1009px;top:471px;width:72px;height:16px;line-height:16px;font-size:13px;text-align:center;transform:scaleX(0.906)">27.05.1970</div>
<div style="left:8px;top:503px;width:119px;height:1px;background:#000"></div>
<div style="left:400px;top:503px;width:205px;height:1px;background:#000"></div>
<div style="left:666px;top:503px;width:416px;height:1px;background:#000"></div>
<div class="serif" style="left:9px;top:488px;width:118px;height:16px;line-height:16px;font-size:13.25px;text-align:center">ВМА им.Кузнецова</div>
<div class="serif" style="left:402px;top:488px;width:136px;height:16px;line-height:16px;font-size:13.1px;text-align:center">полковник</div>
<div class="serif" style="left:539px;top:488px;width:61px;height:16px;line-height:16px;font-size:12.4px;text-align:center">И-258200</div>
<div class="serif" style="left:672px;top:488px;width:42px;height:16px;line-height:16px;font-size:13px;text-align:center">4</div>
<div class="serif" style="left:715px;top:488px;width:69px;height:16px;line-height:16px;font-size:13px;text-align:center;transform:scaleX(0.906)">13.08.1987</div>
<div class="serif" style="left:785px;top:488px;width:74px;height:16px;line-height:16px;font-size:13px;text-align:center;transform:scaleX(0.906)">27.10.1970</div>
<div class="serif" style="left:860px;top:488px;width:71px;height:16px;line-height:16px;font-size:13px;text-align:center">ДПВ</div>
<div class="serif" style="left:932px;top:488px;width:76px;height:16px;line-height:16px;font-size:13px;text-align:center;transform:scaleX(0.906)">06.06.1997</div>
<div class="serif" style="left:1009px;top:488px;width:72px;height:16px;line-height:16px;font-size:13px;text-align:center;transform:scaleX(0.906)">13.08.1966</div>
<div class="tri" style="left:672px;top:487px"></div>
<div style="left:8px;top:520px;width:119px;height:1px;background:#000"></div>
<div style="left:400px;top:520px;width:205px;height:1px;background:#000"></div>
<div style="left:666px;top:520px;width:416px;height:1px;background:#000"></div>
<div class="serif" style="left:9px;top:505px;width:118px;height:16px;line-height:16px;font-size:13.25px;text-align:center">ВМА им.Кузнецова</div>
<div class="serif" style="left:402px;top:505px;width:136px;height:16px;line-height:16px;font-size:13.1px;text-align:center">капитан первого ранга</div>
<div class="serif" style="left:539px;top:505px;width:61px;height:16px;line-height:16px;font-size:12.4px;text-align:center">Н-074125</div>
<div class="serif" style="left:672px;top:505px;width:42px;height:16px;line-height:16px;font-size:13px;text-align:center">4</div>
<div class="serif" style="left:715px;top:505px;width:69px;height:16px;line-height:16px;font-size:13px;text-align:center;transform:scaleX(0.906)">25.06.1990</div>
<div class="serif" style="left:785px;top:505px;width:74px;height:16px;line-height:16px;font-size:13px;text-align:center;transform:scaleX(0.906)">25.06.1982</div>
<div class="serif" style="left:860px;top:505px;width:71px;height:16px;line-height:16px;font-size:13px;text-align:center">ДПВ</div>
<div class="serif" style="left:932px;top:505px;width:76px;height:16px;line-height:16px;font-size:13px;text-align:center;transform:scaleX(0.906)">24.06.1997</div>
<div class="serif" style="left:1009px;top:505px;width:72px;height:16px;line-height:16px;font-size:13px;text-align:center;transform:scaleX(0.906)">24.06.1977</div>
<div class="tri" style="left:672px;top:504px"></div>
<div style="left:8px;top:537px;width:119px;height:1px;background:#000"></div>
<div style="left:400px;top:537px;width:205px;height:1px;background:#000"></div>
<div style="left:666px;top:537px;width:416px;height:1px;background:#000"></div>
<div class="serif" style="left:9px;top:522px;width:118px;height:16px;line-height:16px;font-size:13.25px;text-align:center">ВМА им.Кузнецова</div>
<div class="serif" style="left:402px;top:522px;width:136px;height:16px;line-height:16px;font-size:13.1px;text-align:center">капитан первого ранга</div>
<div class="serif" style="left:539px;top:522px;width:61px;height:16px;line-height:16px;font-size:12.4px;text-align:center">Л-587670</div>
<div class="serif" style="left:672px;top:522px;width:42px;height:16px;line-height:16px;font-size:13px;text-align:center">1</div>
<div class="serif" style="left:715px;top:522px;width:69px;height:16px;line-height:16px;font-size:13px;text-align:center;transform:scaleX(0.906)">27.11.1997</div>
<div class="serif" style="left:785px;top:522px;width:74px;height:16px;line-height:16px;font-size:13px;text-align:center;transform:scaleX(0.906)">06.01.1975</div>
<div class="serif" style="left:860px;top:522px;width:71px;height:16px;line-height:16px;font-size:13px;text-align:center">ДПВ</div>
<div class="serif" style="left:932px;top:522px;width:76px;height:16px;line-height:16px;font-size:13px;text-align:center;transform:scaleX(0.906)">24.06.1997</div>
<div class="serif" style="left:1009px;top:522px;width:72px;height:16px;line-height:16px;font-size:13px;text-align:center;transform:scaleX(0.906)">25.06.1970</div>
<div style="left:8px;top:554px;width:119px;height:1px;background:#000"></div>
<div style="left:400px;top:554px;width:205px;height:1px;background:#000"></div>
<div style="left:666px;top:554px;width:416px;height:1px;background:#000"></div>
<div class="serif" style="left:9px;top:539px;width:118px;height:16px;line-height:16px;font-size:13.25px;text-align:center">ВМА им.Кузнецова</div>
<div class="serif" style="left:402px;top:539px;width:136px;height:16px;line-height:16px;font-size:13.1px;text-align:center">капитан первого ранга</div>
<div class="serif" style="left:539px;top:539px;width:61px;height:16px;line-height:16px;font-size:12.4px;text-align:center">Л-481613</div>
<div class="serif" style="left:672px;top:539px;width:42px;height:16px;line-height:16px;font-size:13px;text-align:center">3</div>
<div class="serif" style="left:715px;top:539px;width:69px;height:16px;line-height:16px;font-size:13px;text-align:center;transform:scaleX(0.906)">26.11.1992</div>
<div class="serif" style="left:785px;top:539px;width:74px;height:16px;line-height:16px;font-size:13px;text-align:center;transform:scaleX(0.906)">24.06.1975</div>
<div class="serif" style="left:860px;top:539px;width:71px;height:16px;line-height:16px;font-size:13px;text-align:center">ДПВ</div>
<div class="serif" style="left:932px;top:539px;width:76px;height:16px;line-height:16px;font-size:13px;text-align:center;transform:scaleX(0.906)">13.07.1997</div>
<div class="serif" style="left:1009px;top:539px;width:72px;height:16px;line-height:16px;font-size:13px;text-align:center;transform:scaleX(0.906)">14.07.1970</div>
<div style="left:8px;top:571px;width:119px;height:1px;background:#000"></div>
<div style="left:400px;top:571px;width:205px;height:1px;background:#000"></div>
<div style="left:666px;top:571px;width:416px;height:1px;background:#000"></div>
<div class="serif" style="left:9px;top:556px;width:118px;height:16px;line-height:16px;font-size:13.25px;text-align:center">СПбГЖК</div>
<div class="serif" style="left:402px;top:556px;width:136px;height:16px;line-height:16px;font-size:13.1px;text-align:center">контр-адмирал</div>
<div class="serif" style="left:539px;top:556px;width:61px;height:16px;line-height:16px;font-size:12.4px;text-align:center">С-781030</div>
<div class="serif" style="left:672px;top:556px;width:42px;height:16px;line-height:16px;font-size:13px;text-align:center">5</div>
<div class="serif" style="left:715px;top:556px;width:69px;height:16px;line-height:16px;font-size:13px;text-align:center;transform:scaleX(0.906)">25.11.1990</div>
<div class="serif" style="left:785px;top:556px;width:74px;height:16px;line-height:16px;font-size:13px;text-align:center;transform:scaleX(0.906)">26.07.1993</div>
<div class="serif" style="left:860px;top:556px;width:71px;height:16px;line-height:16px;font-size:13px;text-align:center">ДПВ</div>
<div class="serif" style="left:932px;top:556px;width:76px;height:16px;line-height:16px;font-size:13px;text-align:center;transform:scaleX(0.906)">25.07.1997</div>
<div class="serif" style="left:1009px;top:556px;width:72px;height:16px;line-height:16px;font-size:13px;text-align:center;transform:scaleX(0.906)">26.07.1970</div>
<div style="left:8px;top:588px;width:119px;height:1px;background:#000"></div>
<div style="left:400px;top:588px;width:205px;height:1px;background:#000"></div>
<div style="left:666px;top:588px;width:416px;height:1px;background:#000"></div>
<div class="serif" style="left:9px;top:573px;width:118px;height:16px;line-height:16px;font-size:13.25px;text-align:center">СПбВМИ</div>
<div class="serif" style="left:402px;top:573px;width:136px;height:16px;line-height:16px;font-size:13.1px;text-align:center">капитан первого ранга</div>
<div class="serif" style="left:539px;top:573px;width:61px;height:16px;line-height:16px;font-size:12.4px;text-align:center">М-574315</div>
<div class="serif" style="left:672px;top:573px;width:42px;height:16px;line-height:16px;font-size:13px;text-align:center">3</div>
<div class="serif" style="left:715px;top:573px;width:69px;height:16px;line-height:16px;font-size:13px;text-align:center;transform:scaleX(0.906)">10.04.2006</div>
<div class="serif" style="left:785px;top:573px;width:74px;height:16px;line-height:16px;font-size:13px;text-align:center;transform:scaleX(0.906)">25.06.1982</div>
<div class="serif" style="left:860px;top:573px;width:71px;height:16px;line-height:16px;font-size:13px;text-align:center">ДПВ</div>
<div class="serif" style="left:932px;top:573px;width:76px;height:16px;line-height:16px;font-size:13px;text-align:center;transform:scaleX(0.906)">05.08.1997</div>
<div class="serif" style="left:1009px;top:573px;width:72px;height:16px;line-height:16px;font-size:13px;text-align:center;transform:scaleX(0.906)">05.08.1977</div>
<div style="left:8px;top:605px;width:119px;height:1px;background:#000"></div>
<div style="left:400px;top:605px;width:205px;height:1px;background:#000"></div>
<div style="left:666px;top:605px;width:416px;height:1px;background:#000"></div>
<div class="serif" style="left:9px;top:590px;width:118px;height:16px;line-height:16px;font-size:13.25px;text-align:center">ВМА им.Кузнецова</div>
<div class="serif" style="left:402px;top:590px;width:136px;height:16px;line-height:16px;font-size:13.1px;text-align:center">капитан первого ранга</div>
<div class="serif" style="left:539px;top:590px;width:61px;height:16px;line-height:16px;font-size:12.4px;text-align:center">И-111264</div>
<div class="serif" style="left:672px;top:590px;width:42px;height:16px;line-height:16px;font-size:13px;text-align:center">1</div>
<div class="serif" style="left:715px;top:590px;width:69px;height:16px;line-height:16px;font-size:13px;text-align:center;transform:scaleX(0.906)">20.06.2000</div>
<div class="serif" style="left:785px;top:590px;width:74px;height:16px;line-height:16px;font-size:13px;text-align:center;transform:scaleX(0.906)">29.06.1993</div>
<div class="serif" style="left:860px;top:590px;width:71px;height:16px;line-height:16px;font-size:13px;text-align:center">ДПВ</div>
<div class="serif" style="left:932px;top:590px;width:76px;height:16px;line-height:16px;font-size:13px;text-align:center;transform:scaleX(0.906)">30.12.1997</div>
<div class="serif" style="left:1009px;top:590px;width:72px;height:16px;line-height:16px;font-size:13px;text-align:center;transform:scaleX(0.906)">29.06.1971</div>
<div class="tri" style="left:672px;top:589px"></div>
<div style="left:8px;top:622px;width:119px;height:1px;background:#000"></div>
<div style="left:400px;top:622px;width:205px;height:1px;background:#000"></div>
<div style="left:666px;top:622px;width:416px;height:1px;background:#000"></div>
<div class="serif" style="left:9px;top:607px;width:118px;height:16px;line-height:16px;font-size:13.25px;text-align:center">ВСОК</div>
<div class="serif" style="left:402px;top:607px;width:136px;height:16px;line-height:16px;font-size:13.1px;text-align:center">капитан первого ранга</div>
<div class="serif" style="left:539px;top:607px;width:61px;height:16px;line-height:16px;font-size:12.4px;text-align:center">Ч-338925</div>
<div class="serif" style="left:672px;top:607px;width:42px;height:16px;line-height:16px;font-size:13px;text-align:center">1</div>
<div class="serif" style="left:715px;top:607px;width:69px;height:16px;line-height:16px;font-size:13px;text-align:center;transform:scaleX(0.906)">29.10.1996</div>
<div class="serif" style="left:785px;top:607px;width:74px;height:16px;line-height:16px;font-size:13px;text-align:center;transform:scaleX(0.906)">29.06.1971</div>
<div class="serif" style="left:860px;top:607px;width:71px;height:16px;line-height:16px;font-size:13px;text-align:center">СЗ</div>
<div class="serif" style="left:932px;top:607px;width:76px;height:16px;line-height:16px;font-size:13px;text-align:center;transform:scaleX(0.906)">11.01.1998</div>
<div class="serif" style="left:1009px;top:607px;width:72px;height:16px;line-height:16px;font-size:13px;text-align:center;transform:scaleX(0.906)">15.06.1977</div>
<div style="left:8px;top:639px;width:119px;height:1px;background:#000"></div>
<div style="left:400px;top:639px;width:205px;height:1px;background:#000"></div>
<div style="left:666px;top:639px;width:416px;height:1px;background:#000"></div>
<div class="serif" style="left:9px;top:624px;width:118px;height:16px;line-height:16px;font-size:13.25px;text-align:center">ВМА им.Кузнецова</div>
<div class="serif" style="left:402px;top:624px;width:136px;height:16px;line-height:16px;font-size:13.1px;text-align:center">капитан первого ранга</div>
<div class="serif" style="left:539px;top:624px;width:61px;height:16px;line-height:16px;font-size:12.4px;text-align:center">М-265546</div>
<div class="serif" style="left:672px;top:624px;width:42px;height:16px;line-height:16px;font-size:13px;text-align:center">3</div>
<div class="serif" style="left:715px;top:624px;width:69px;height:16px;line-height:16px;font-size:13px;text-align:center;transform:scaleX(0.906)">20.06.2000</div>
<div class="serif" style="left:785px;top:624px;width:74px;height:16px;line-height:16px;font-size:13px;text-align:center;transform:scaleX(0.906)">29.06.1979</div>
<div class="serif" style="left:860px;top:624px;width:71px;height:16px;line-height:16px;font-size:13px;text-align:center">ДПВ</div>
<div class="serif" style="left:932px;top:624px;width:76px;height:16px;line-height:16px;font-size:13px;text-align:center;transform:scaleX(0.906)">28.03.1998</div>
<div class="serif" style="left:1009px;top:624px;width:72px;height:16px;line-height:16px;font-size:13px;text-align:center;transform:scaleX(0.906)">01.08.1974</div>
<div style="left:8px;top:656px;width:119px;height:1px;background:#000"></div>
<div style="left:400px;top:656px;width:205px;height:1px;background:#000"></div>
<div style="left:666px;top:656px;width:416px;height:1px;background:#000"></div>
<div class="serif" style="left:9px;top:641px;width:118px;height:16px;line-height:16px;font-size:13.25px;text-align:center">СПбВМИ</div>
<div class="serif" style="left:402px;top:641px;width:136px;height:16px;line-height:16px;font-size:13.1px;text-align:center">капитан второго ранга</div>
<div class="serif" style="left:539px;top:641px;width:61px;height:16px;line-height:16px;font-size:12.4px;text-align:center">Л-226375</div>
<div class="serif" style="left:672px;top:641px;width:42px;height:16px;line-height:16px;font-size:13px;text-align:center">3</div>
<div class="serif" style="left:715px;top:641px;width:69px;height:16px;line-height:16px;font-size:13px;text-align:center;transform:scaleX(0.906)">15.03.1995</div>
<div class="serif" style="left:785px;top:641px;width:74px;height:16px;line-height:16px;font-size:13px;text-align:center;transform:scaleX(0.906)">24.06.1975</div>
<div class="serif" style="left:860px;top:641px;width:71px;height:16px;line-height:16px;font-size:13px;text-align:center">ДПВ</div>
<div class="serif" style="left:932px;top:641px;width:76px;height:16px;line-height:16px;font-size:13px;text-align:center;transform:scaleX(0.906)">28.03.1998</div>
<div class="serif" style="left:1009px;top:641px;width:72px;height:16px;line-height:16px;font-size:13px;text-align:center;transform:scaleX(0.906)">30.07.1972</div>
<div class="tri" style="left:672px;top:640px"></div>
<div style="left:8px;top:673px;width:119px;height:1px;background:#000"></div>
<div style="left:400px;top:673px;width:205px;height:1px;background:#000"></div>
<div style="left:666px;top:673px;width:416px;height:1px;background:#000"></div>
<div class="serif" style="left:9px;top:658px;width:118px;height:16px;line-height:16px;font-size:13.25px;text-align:center">СПбВМИ</div>
<div class="serif" style="left:402px;top:658px;width:136px;height:16px;line-height:16px;font-size:13.1px;text-align:center">капитан первого ранга</div>
<div class="serif" style="left:539px;top:658px;width:61px;height:16px;line-height:16px;font-size:12.4px;text-align:center">Д-808132</div>
<div class="serif" style="left:672px;top:658px;width:42px;height:16px;line-height:16px;font-size:13px;text-align:center">5</div>
<div class="serif" style="left:715px;top:658px;width:69px;height:16px;line-height:16px;font-size:13px;text-align:center;transform:scaleX(0.906)">18.05.1994</div>
<div class="serif" style="left:785px;top:658px;width:74px;height:16px;line-height:16px;font-size:13px;text-align:center;transform:scaleX(0.906)">29.08.1971</div>
<div class="serif" style="left:860px;top:658px;width:71px;height:16px;line-height:16px;font-size:13px;text-align:center">ДПВ</div>
<div class="serif" style="left:932px;top:658px;width:76px;height:16px;line-height:16px;font-size:13px;text-align:center;transform:scaleX(0.906)">13.06.1998</div>
<div class="serif" style="left:1009px;top:658px;width:72px;height:16px;line-height:16px;font-size:13px;text-align:center;transform:scaleX(0.906)">26.07.1966</div>
<div class="tri" style="left:672px;top:657px"></div>
<div style="left:8px;top:690px;width:119px;height:1px;background:#000"></div>
<div style="left:400px;top:690px;width:205px;height:1px;background:#000"></div>
<div style="left:666px;top:690px;width:416px;height:1px;background:#000"></div>
<div class="serif" style="left:9px;top:675px;width:118px;height:16px;line-height:16px;font-size:13.25px;text-align:center">ВМА им.Кузнецова</div>
<div class="serif" style="left:402px;top:675px;width:136px;height:16px;line-height:16px;font-size:13.1px;text-align:center">полковник</div>
<div class="serif" style="left:539px;top:675px;width:61px;height:16px;line-height:16px;font-size:12.4px;text-align:center">Л-482502</div>
<div class="serif" style="left:672px;top:675px;width:42px;height:16px;line-height:16px;font-size:13px;text-align:center">5</div>
<div class="serif" style="left:715px;top:675px;width:69px;height:16px;line-height:16px;font-size:13px;text-align:center;transform:scaleX(0.906)">19.08.1988</div>
<div class="serif" style="left:785px;top:675px;width:74px;height:16px;line-height:16px;font-size:13px;text-align:center;transform:scaleX(0.906)">30.08.1976</div>
<div class="serif" style="left:860px;top:675px;width:71px;height:16px;line-height:16px;font-size:13px;text-align:center">ДПВ</div>
<div class="serif" style="left:932px;top:675px;width:76px;height:16px;line-height:16px;font-size:13px;text-align:center;transform:scaleX(0.906)">19.07.1998</div>
<div class="serif" style="left:1009px;top:675px;width:72px;height:16px;line-height:16px;font-size:13px;text-align:center;transform:scaleX(0.906)">20.07.1971</div>
<div style="left:8px;top:707px;width:119px;height:1px;background:#000"></div>
<div style="left:400px;top:707px;width:205px;height:1px;background:#000"></div>
<div style="left:666px;top:707px;width:416px;height:1px;background:#000"></div>
<div class="serif" style="left:9px;top:692px;width:118px;height:16px;line-height:16px;font-size:13.25px;text-align:center">13143</div>
<div class="serif" style="left:402px;top:692px;width:136px;height:16px;line-height:16px;font-size:13.1px;text-align:center">капитан второго ранга</div>
<div class="serif" style="left:539px;top:692px;width:61px;height:16px;line-height:16px;font-size:12.4px;text-align:center">П-996475</div>
<div class="serif" style="left:672px;top:692px;width:42px;height:16px;line-height:16px;font-size:13px;text-align:center">4</div>
<div class="serif" style="left:715px;top:692px;width:69px;height:16px;line-height:16px;font-size:13px;text-align:center;transform:scaleX(0.906)">27.05.1996</div>
<div class="serif" style="left:785px;top:692px;width:74px;height:16px;line-height:16px;font-size:13px;text-align:center;transform:scaleX(0.906)">25.06.1983</div>
<div class="serif" style="left:860px;top:692px;width:71px;height:16px;line-height:16px;font-size:13px;text-align:center">ОШМ</div>
<div class="serif" style="left:932px;top:692px;width:76px;height:16px;line-height:16px;font-size:13px;text-align:center;transform:scaleX(0.906)">26.07.1998</div>
<div class="serif" style="left:1009px;top:692px;width:72px;height:16px;line-height:16px;font-size:13px;text-align:center;transform:scaleX(0.906)">26.07.1978</div>
<div class="tri" style="left:672px;top:691px"></div>
<div class="tri" style="left:9px;top:691px"></div>
<div style="left:8px;top:724px;width:119px;height:1px;background:#000"></div>
<div style="left:400px;top:724px;width:205px;height:1px;background:#000"></div>
<div style="left:666px;top:724px;width:416px;height:1px;background:#000"></div>
<div class="serif" style="left:9px;top:709px;width:118px;height:16px;line-height:16px;font-size:13.25px;text-align:center">27177</div>
<div class="serif" style="left:402px;top:709px;width:136px;height:16px;line-height:16px;font-size:13.1px;text-align:center">капитан второго ранга</div>
<div class="serif" style="left:539px;top:709px;width:61px;height:16px;line-height:16px;font-size:12.4px;text-align:center">Л-484998</div>
<div class="serif" style="left:672px;top:709px;width:42px;height:16px;line-height:16px;font-size:13px;text-align:center">3</div>
<div class="serif" style="left:715px;top:709px;width:69px;height:16px;line-height:16px;font-size:13px;text-align:center;transform:scaleX(0.906)">31.10.1988</div>
<div class="serif" style="left:785px;top:709px;width:74px;height:16px;line-height:16px;font-size:13px;text-align:center;transform:scaleX(0.906)">28.06.1976</div>
<div class="serif" style="left:860px;top:709px;width:71px;height:16px;line-height:16px;font-size:13px;text-align:center">ДПВ</div>
<div class="serif" style="left:932px;top:709px;width:76px;height:16px;line-height:16px;font-size:13px;text-align:center;transform:scaleX(0.906)">27.07.1998</div>
<div class="serif" style="left:1009px;top:709px;width:72px;height:16px;line-height:16px;font-size:13px;text-align:center;transform:scaleX(0.906)">28.07.1971</div>
<div class="tri" style="left:9px;top:708px"></div>
<div style="left:8px;top:741px;width:119px;height:1px;background:#000"></div>
<div style="left:400px;top:741px;width:205px;height:1px;background:#000"></div>
<div style="left:666px;top:741px;width:416px;height:1px;background:#000"></div>
<div class="serif" style="left:9px;top:726px;width:118px;height:16px;line-height:16px;font-size:13.25px;text-align:center">ВМА им.Кузнецова</div>
<div class="serif" style="left:402px;top:726px;width:136px;height:16px;line-height:16px;font-size:13.1px;text-align:center">прапорщик</div>
<div class="serif" style="left:539px;top:726px;width:61px;height:16px;line-height:16px;font-size:12.4px;text-align:center"></div>
<div class="serif" style="left:672px;top:726px;width:42px;height:16px;line-height:16px;font-size:13px;text-align:center">3</div>
<div class="serif" style="left:715px;top:726px;width:69px;height:16px;line-height:16px;font-size:13px;text-align:center;transform:scaleX(0.906)">10.12.1996</div>
<div class="serif" style="left:785px;top:726px;width:74px;height:16px;line-height:16px;font-size:13px;text-align:center;transform:scaleX(0.906)">22.02.1986</div>
<div class="serif" style="left:860px;top:726px;width:71px;height:16px;line-height:16px;font-size:13px;text-align:center">ДПВ</div>
<div class="serif" style="left:932px;top:726px;width:76px;height:16px;line-height:16px;font-size:13px;text-align:center;transform:scaleX(0.906)">27.07.1998</div>
<div class="serif" style="left:1009px;top:726px;width:72px;height:16px;line-height:16px;font-size:13px;text-align:center;transform:scaleX(0.906)">05.11.1983</div>
<div class="tri" style="left:672px;top:725px"></div>
<div style="left:8px;top:758px;width:119px;height:1px;background:#000"></div>
<div style="left:400px;top:758px;width:205px;height:1px;background:#000"></div>
<div style="left:666px;top:758px;width:416px;height:1px;background:#000"></div>
<div class="serif" style="left:9px;top:743px;width:118px;height:16px;line-height:16px;font-size:13.25px;text-align:center">ВСОК</div>
<div class="serif" style="left:402px;top:743px;width:136px;height:16px;line-height:16px;font-size:13.1px;text-align:center">капитан первого ранга</div>
<div class="serif" style="left:539px;top:743px;width:61px;height:16px;line-height:16px;font-size:12.4px;text-align:center">М-264086</div>
<div class="serif" style="left:672px;top:743px;width:42px;height:16px;line-height:16px;font-size:13px;text-align:center">3</div>
<div class="serif" style="left:715px;top:743px;width:69px;height:16px;line-height:16px;font-size:13px;text-align:center;transform:scaleX(0.906)">23.06.1992</div>
<div class="serif" style="left:785px;top:743px;width:74px;height:16px;line-height:16px;font-size:13px;text-align:center;transform:scaleX(0.906)">28.06.1974</div>
<div class="serif" style="left:860px;top:743px;width:71px;height:16px;line-height:16px;font-size:13px;text-align:center">ДПВ</div>
<div class="serif" style="left:932px;top:743px;width:76px;height:16px;line-height:16px;font-size:13px;text-align:center;transform:scaleX(0.906)">29.07.1998</div>
<div class="serif" style="left:1009px;top:743px;width:72px;height:16px;line-height:16px;font-size:13px;text-align:center;transform:scaleX(0.906)">30.07.1971</div>
<div style="left:8px;top:775px;width:119px;height:1px;background:#000"></div>
<div style="left:400px;top:775px;width:205px;height:1px;background:#000"></div>
<div style="left:666px;top:775px;width:416px;height:1px;background:#000"></div>
<div class="serif" style="left:9px;top:760px;width:118px;height:16px;line-height:16px;font-size:13.25px;text-align:center">СПбВМИ</div>
<div class="serif" style="left:402px;top:760px;width:136px;height:16px;line-height:16px;font-size:13.1px;text-align:center">капитан первого ранга</div>
<div class="serif" style="left:539px;top:760px;width:61px;height:16px;line-height:16px;font-size:12.4px;text-align:center">Л-485029</div>
<div class="serif" style="left:672px;top:760px;width:42px;height:16px;line-height:16px;font-size:13px;text-align:center">4</div>
<div class="serif" style="left:715px;top:760px;width:69px;height:16px;line-height:16px;font-size:13px;text-align:center;transform:scaleX(0.906)">28.03.1997</div>
<div class="serif" style="left:785px;top:760px;width:74px;height:16px;line-height:16px;font-size:13px;text-align:center;transform:scaleX(0.906)">22.06.1976</div>
<div class="serif" style="left:860px;top:760px;width:71px;height:16px;line-height:16px;font-size:13px;text-align:center">ДПВ</div>
<div class="serif" style="left:932px;top:760px;width:76px;height:16px;line-height:16px;font-size:13px;text-align:center;transform:scaleX(0.906)">29.07.1998</div>
<div class="serif" style="left:1009px;top:760px;width:72px;height:16px;line-height:16px;font-size:13px;text-align:center;transform:scaleX(0.906)">30.07.1971</div>
<div style="left:8px;top:792px;width:119px;height:1px;background:#000"></div>
<div style="left:400px;top:792px;width:205px;height:1px;background:#000"></div>
<div style="left:666px;top:792px;width:416px;height:1px;background:#000"></div>
<div class="serif" style="left:9px;top:777px;width:118px;height:16px;line-height:16px;font-size:13.25px;text-align:center">СПбВМИ</div>
<div class="serif" style="left:402px;top:777px;width:136px;height:16px;line-height:16px;font-size:13.1px;text-align:center">капитан первого ранга</div>
<div class="serif" style="left:539px;top:777px;width:61px;height:16px;line-height:16px;font-size:12.4px;text-align:center">М-264153</div>
<div class="serif" style="left:672px;top:777px;width:42px;height:16px;line-height:16px;font-size:13px;text-align:center">3</div>
<div class="serif" style="left:715px;top:777px;width:69px;height:16px;line-height:16px;font-size:13px;text-align:center;transform:scaleX(0.906)">12.08.1992</div>
<div class="serif" style="left:785px;top:777px;width:74px;height:16px;line-height:16px;font-size:13px;text-align:center;transform:scaleX(0.906)">28.06.1976</div>
<div class="serif" style="left:860px;top:777px;width:71px;height:16px;line-height:16px;font-size:13px;text-align:center">ДПВ</div>
<div class="serif" style="left:932px;top:777px;width:76px;height:16px;line-height:16px;font-size:13px;text-align:center;transform:scaleX(0.906)">29.07.1998</div>
<div class="serif" style="left:1009px;top:777px;width:72px;height:16px;line-height:16px;font-size:13px;text-align:center;transform:scaleX(0.906)">30.07.1971</div>
<div style="left:8px;top:809px;width:119px;height:1px;background:#000"></div>
<div style="left:400px;top:809px;width:205px;height:1px;background:#000"></div>
<div style="left:666px;top:809px;width:416px;height:1px;background:#000"></div>
<div class="serif" style="left:9px;top:794px;width:118px;height:16px;line-height:16px;font-size:13.25px;text-align:center">СПбВМИ</div>
<div class="serif" style="left:402px;top:794px;width:136px;height:16px;line-height:16px;font-size:13.1px;text-align:center">капитан второго ранга</div>
<div class="serif" style="left:539px;top:794px;width:61px;height:16px;line-height:16px;font-size:12.4px;text-align:center">М-265444</div>
<div class="serif" style="left:672px;top:794px;width:42px;height:16px;line-height:16px;font-size:13px;text-align:center">4</div>
<div class="serif" style="left:715px;top:794px;width:69px;height:16px;line-height:16px;font-size:13px;text-align:center;transform:scaleX(0.906)">01.03.1990</div>
<div class="serif" style="left:785px;top:794px;width:74px;height:16px;line-height:16px;font-size:13px;text-align:center;transform:scaleX(0.906)">28.06.1976</div>
<div class="serif" style="left:860px;top:794px;width:71px;height:16px;line-height:16px;font-size:13px;text-align:center">ДПВ</div>
<div class="serif" style="left:932px;top:794px;width:76px;height:16px;line-height:16px;font-size:13px;text-align:center;transform:scaleX(0.906)">29.07.1998</div>
<div class="serif" style="left:1009px;top:794px;width:72px;height:16px;line-height:16px;font-size:13px;text-align:center;transform:scaleX(0.906)">30.07.1971</div>
<div class="serif" style="left:650px;top:556px;width:19px;height:16px;line-height:16px;font-size:13px;text-align:right;overflow:hidden;clip-path:inset(0 0 0 16px)">5</div>
<div style="left:604px;top:564px;width:1px;height:4px;background:#999"></div>
<div class="serif" style="left:650px;top:573px;width:19px;height:16px;line-height:16px;font-size:13px;text-align:right;overflow:hidden;clip-path:inset(0 0 0 16px)">3</div>
<div style="left:604px;top:581px;width:1px;height:4px;background:#999"></div>
<div class="serif" style="left:650px;top:658px;width:19px;height:16px;line-height:16px;font-size:13px;text-align:right;overflow:hidden;clip-path:inset(0 0 0 16px)">3</div>
<div style="left:604px;top:666px;width:1px;height:4px;background:#999"></div>
<div style="left:8px;top:197px;width:1px;height:616px;background:#000"></div>
<div style="left:127px;top:197px;width:1px;height:616px;background:#000"></div>
<div style="left:400px;top:197px;width:2px;height:616px;background:#000"></div>
<div style="left:538px;top:197px;width:1px;height:616px;background:#000"></div>
<div style="left:600px;top:197px;width:1px;height:616px;background:#000"></div>
<div style="left:671px;top:197px;width:1px;height:616px;background:#000"></div>
<div style="left:714px;top:197px;width:1px;height:616px;background:#000"></div>
<div style="left:784px;top:197px;width:1px;height:616px;background:#000"></div>
<div style="left:859px;top:197px;width:1px;height:616px;background:#000"></div>
<div style="left:931px;top:197px;width:1px;height:616px;background:#000"></div>
<div style="left:1008px;top:197px;width:1px;height:616px;background:#000"></div>
<div style="left:399px;top:281px;width:141px;height:20px;border:3px solid #000;background:transparent"></div>
<div style="left:400px;top:282px;width:139px;height:18px;border:1px solid #fff"></div>
<div style="left:536px;top:297px;width:6px;height:6px;background:#000"></div>
<div style="left:538px;top:297px;width:1px;height:6px;background:#fff"></div>
<div style="left:536px;top:299px;width:6px;height:1px;background:#fff"></div>
<div style="left:534px;top:297px;width:2px;height:6px;background:#fff"></div>
<div style="left:536px;top:295px;width:6px;height:2px;background:#fff"></div>
<div style="left:0px;top:49px;width:8px;height:761px;background:#e3ebf6"></div>
<div style="left:8px;top:49px;width:1px;height:761px;background:#9eb0c5"></div>
<div style="left:0px;top:69px;width:8px;height:1px;background:#c3cbd5"></div>
<div style="left:0px;top:90px;width:8px;height:1px;background:#c3cbd5"></div>
<div style="left:0px;top:111px;width:8px;height:1px;background:#c3cbd5"></div>
<div style="left:0px;top:128px;width:8px;height:1px;background:#c3cbd5"></div>
<div style="left:0px;top:180px;width:8px;height:1px;background:#c3cbd5"></div>
<div style="left:0px;top:197px;width:8px;height:1px;background:#c3cbd5"></div>
<div style="left:0px;top:214px;width:8px;height:1px;background:#c3cbd5"></div>
<div style="left:0px;top:231px;width:8px;height:1px;background:#c3cbd5"></div>
<div style="left:0px;top:248px;width:8px;height:1px;background:#c3cbd5"></div>
<div style="left:0px;top:265px;width:8px;height:1px;background:#c3cbd5"></div>
<div style="left:0px;top:282px;width:8px;height:1px;background:#c3cbd5"></div>
<div style="left:0px;top:299px;width:8px;height:1px;background:#c3cbd5"></div>
<div style="left:0px;top:316px;width:8px;height:1px;background:#c3cbd5"></div>
<div style="left:0px;top:333px;width:8px;height:1px;background:#c3cbd5"></div>
<div style="left:0px;top:350px;width:8px;height:1px;background:#c3cbd5"></div>
<div style="left:0px;top:367px;width:8px;height:1px;background:#c3cbd5"></div>
<div style="left:0px;top:384px;width:8px;height:1px;background:#c3cbd5"></div>
<div style="left:0px;top:401px;width:8px;height:1px;background:#c3cbd5"></div>
<div style="left:0px;top:418px;width:8px;height:1px;background:#c3cbd5"></div>
<div style="left:0px;top:435px;width:8px;height:1px;background:#c3cbd5"></div>
<div style="left:0px;top:452px;width:8px;height:1px;background:#c3cbd5"></div>
<div style="left:0px;top:469px;width:8px;height:1px;background:#c3cbd5"></div>
<div style="left:0px;top:486px;width:8px;height:1px;background:#c3cbd5"></div>
<div style="left:0px;top:503px;width:8px;height:1px;background:#c3cbd5"></div>
<div style="left:0px;top:520px;width:8px;height:1px;background:#c3cbd5"></div>
<div style="left:0px;top:537px;width:8px;height:1px;background:#c3cbd5"></div>
<div style="left:0px;top:554px;width:8px;height:1px;background:#c3cbd5"></div>
<div style="left:0px;top:571px;width:8px;height:1px;background:#c3cbd5"></div>
<div style="left:0px;top:588px;width:8px;height:1px;background:#c3cbd5"></div>
<div style="left:0px;top:605px;width:8px;height:1px;background:#c3cbd5"></div>
<div style="left:0px;top:622px;width:8px;height:1px;background:#c3cbd5"></div>
<div style="left:0px;top:639px;width:8px;height:1px;background:#c3cbd5"></div>
<div style="left:0px;top:656px;width:8px;height:1px;background:#c3cbd5"></div>
<div style="left:0px;top:673px;width:8px;height:1px;background:#c3cbd5"></div>
<div style="left:0px;top:690px;width:8px;height:1px;background:#c3cbd5"></div>
<div style="left:0px;top:707px;width:8px;height:1px;background:#c3cbd5"></div>
<div style="left:0px;top:724px;width:8px;height:1px;background:#c3cbd5"></div>
<div style="left:0px;top:741px;width:8px;height:1px;background:#c3cbd5"></div>
<div style="left:0px;top:758px;width:8px;height:1px;background:#c3cbd5"></div>
<div style="left:0px;top:775px;width:8px;height:1px;background:#c3cbd5"></div>
<div style="left:0px;top:792px;width:8px;height:1px;background:#c3cbd5"></div>
<div style="left:0px;top:809px;width:8px;height:1px;background:#c3cbd5"></div>
<div style="left:0px;top:283px;width:8px;height:16px;background:linear-gradient(#f9dca6,#f3c061)"></div>
<div class="sans" style="left:-20px;top:74px;width:22.5px;height:16px;line-height:16px;font-size:14px;color:#303a48;text-align:right;overflow:hidden">0</div>
<div class="sans" style="left:-20px;top:95px;width:22.5px;height:16px;line-height:16px;font-size:14px;color:#303a48;text-align:right;overflow:hidden">1</div>
<div class="sans" style="left:-20px;top:112px;width:22.5px;height:16px;line-height:16px;font-size:14px;color:#303a48;text-align:right;overflow:hidden">2</div>
<div class="sans" style="left:-20px;top:164px;width:22.5px;height:16px;line-height:16px;font-size:14px;color:#303a48;text-align:right;overflow:hidden">3</div>
<div class="sans" style="left:-20px;top:181px;width:22.5px;height:16px;line-height:16px;font-size:14px;color:#303a48;text-align:right;overflow:hidden">4</div>
<div class="sans" style="left:-20px;top:198px;width:22.5px;height:16px;line-height:16px;font-size:14px;color:#303a48;text-align:right;overflow:hidden">5</div>
<div class="sans" style="left:-20px;top:215px;width:22.5px;height:16px;line-height:16px;font-size:14px;color:#303a48;text-align:right;overflow:hidden">6</div>
<div class="sans" style="left:-20px;top:232px;width:22.5px;height:16px;line-height:16px;font-size:14px;color:#303a48;text-align:right;overflow:hidden">7</div>
<div class="sans" style="left:-20px;top:249px;width:22.5px;height:16px;line-height:16px;font-size:14px;color:#303a48;text-align:right;overflow:hidden">8</div>
<div class="sans" style="left:-20px;top:266px;width:22.5px;height:16px;line-height:16px;font-size:14px;color:#303a48;text-align:right;overflow:hidden">9</div>
<div class="sans" style="left:-20px;top:283px;width:22.5px;height:16px;line-height:16px;font-size:14px;color:#303a48;text-align:right;overflow:hidden">0</div>
<div class="sans" style="left:-20px;top:300px;width:22.5px;height:16px;line-height:16px;font-size:14px;color:#303a48;text-align:right;overflow:hidden">1</div>
<div class="sans" style="left:-20px;top:317px;width:22.5px;height:16px;line-height:16px;font-size:14px;color:#303a48;text-align:right;overflow:hidden">2</div>
<div class="sans" style="left:-20px;top:334px;width:22.5px;height:16px;line-height:16px;font-size:14px;color:#303a48;text-align:right;overflow:hidden">3</div>
<div class="sans" style="left:-20px;top:351px;width:22.5px;height:16px;line-height:16px;font-size:14px;color:#303a48;text-align:right;overflow:hidden">4</div>
<div class="sans" style="left:-20px;top:368px;width:22.5px;height:16px;line-height:16px;font-size:14px;color:#303a48;text-align:right;overflow:hidden">5</div>
<div class="sans" style="left:-20px;top:385px;width:22.5px;height:16px;line-height:16px;font-size:14px;color:#303a48;text-align:right;overflow:hidden">6</div>
<div class="sans" style="left:-20px;top:402px;width:22.5px;height:16px;line-height:16px;font-size:14px;color:#303a48;text-align:right;overflow:hidden">7</div>
<div class="sans" style="left:-20px;top:419px;width:22.5px;height:16px;line-height:16px;font-size:14px;color:#303a48;text-align:right;overflow:hidden">8</div>
<div class="sans" style="left:-20px;top:436px;width:22.5px;height:16px;line-height:16px;font-size:14px;color:#303a48;text-align:right;overflow:hidden">9</div>
<div class="sans" style="left:-20px;top:453px;width:22.5px;height:16px;line-height:16px;font-size:14px;color:#303a48;text-align:right;overflow:hidden">0</div>
<div class="sans" style="left:-20px;top:470px;width:22.5px;height:16px;line-height:16px;font-size:14px;color:#303a48;text-align:right;overflow:hidden">1</div>
<div class="sans" style="left:-20px;top:487px;width:22.5px;height:16px;line-height:16px;font-size:14px;color:#303a48;text-align:right;overflow:hidden">2</div>
<div class="sans" style="left:-20px;top:504px;width:22.5px;height:16px;line-height:16px;font-size:14px;color:#303a48;text-align:right;overflow:hidden">3</div>
<div class="sans" style="left:-20px;top:521px;width:22.5px;height:16px;line-height:16px;font-size:14px;color:#303a48;text-align:right;overflow:hidden">4</div>
<div class="sans" style="left:-20px;top:538px;width:22.5px;height:16px;line-height:16px;font-size:14px;color:#303a48;text-align:right;overflow:hidden">5</div>
<div class="sans" style="left:-20px;top:555px;width:22.5px;height:16px;line-height:16px;font-size:14px;color:#303a48;text-align:right;overflow:hidden">6</div>
<div class="sans" style="left:-20px;top:572px;width:22.5px;height:16px;line-height:16px;font-size:14px;color:#303a48;text-align:right;overflow:hidden">7</div>
<div class="sans" style="left:-20px;top:589px;width:22.5px;height:16px;line-height:16px;font-size:14px;color:#303a48;text-align:right;overflow:hidden">8</div>
<div class="sans" style="left:-20px;top:606px;width:22.5px;height:16px;line-height:16px;font-size:14px;color:#303a48;text-align:right;overflow:hidden">9</div>
<div class="sans" style="left:-20px;top:623px;width:22.5px;height:16px;line-height:16px;font-size:14px;color:#303a48;text-align:right;overflow:hidden">0</div>
<div class="sans" style="left:-20px;top:640px;width:22.5px;height:16px;line-height:16px;font-size:14px;color:#303a48;text-align:right;overflow:hidden">1</div>
<div class="sans" style="left:-20px;top:657px;width:22.5px;height:16px;line-height:16px;font-size:14px;color:#303a48;text-align:right;overflow:hidden">2</div>
<div class="sans" style="left:-20px;top:674px;width:22.5px;height:16px;line-height:16px;font-size:14px;color:#303a48;text-align:right;overflow:hidden">3</div>
<div class="sans" style="left:-20px;top:691px;width:22.5px;height:16px;line-height:16px;font-size:14px;color:#303a48;text-align:right;overflow:hidden">4</div>
<div class="sans" style="left:-20px;top:708px;width:22.5px;height:16px;line-height:16px;font-size:14px;color:#303a48;text-align:right;overflow:hidden">5</div>
<div class="sans" style="left:-20px;top:725px;width:22.5px;height:16px;line-height:16px;font-size:14px;color:#303a48;text-align:right;overflow:hidden">6</div>
<div class="sans" style="left:-20px;top:742px;width:22.5px;height:16px;line-height:16px;font-size:14px;color:#303a48;text-align:right;overflow:hidden">7</div>
<div class="sans" style="left:-20px;top:759px;width:22.5px;height:16px;line-height:16px;font-size:14px;color:#303a48;text-align:right;overflow:hidden">8</div>
<div class="sans" style="left:-20px;top:776px;width:22.5px;height:16px;line-height:16px;font-size:14px;color:#303a48;text-align:right;overflow:hidden">9</div>
<div class="sans" style="left:-20px;top:793px;width:22.5px;height:16px;line-height:16px;font-size:14px;color:#303a48;text-align:right;overflow:hidden">0</div>
<div style="left:8px;top:49px;width:1px;height:761px;background:#9ea7b1"></div>
<div style="left:0px;top:813px;width:1094px;height:15px;background:#ffffff"></div>
<div style="left:0px;top:810px;width:8px;height:3px;background:#e3ebf6"></div>
<div style="left:330px;top:813px;width:380px;height:15px;background:linear-gradient(#b9cdea,#a3bbe2 50%,#9bb4de)"></div>
<div style="left:0px;top:813px;width:46px;height:15px;background:linear-gradient(#e9f0f9,#cddcf0 50%,#d9e5f4);border-top:1px solid #8ea0b8;border-right:1px solid #8ea0b8"></div>
<svg style="left:0px;top:813px;width:46px;height:15px" width="46" height="15"><path d="M5 7.5 L9 3.5 L9 11.5 Z" fill="#23407a"/><path d="M19 3.5 L23 7.5 L19 11.5 Z" fill="#23407a"/><path d="M33 3.5 L37 7.5 L33 11.5 Z" fill="#23407a"/><rect x="37.5" y="3.5" width="1.5" height="8" fill="#23407a"/></svg>
<svg style="left:0px;top:810px;width:720px;height:19px" width="720" height="19"><defs>
<linearGradient id="tg" x1="0" y1="0" x2="0" y2="1"><stop offset="0" stop-color="#eef4fb"/><stop offset="0.4" stop-color="#d0e0f4"/><stop offset="0.6" stop-color="#b9d0ef"/><stop offset="1" stop-color="#dce8f6"/></linearGradient>
</defs>
<path d="M156 18.5 L170.5 3.5 L352 3.5 L337.5 18.5 Z" fill="url(#tg)" />
<path d="M156 18.5 L170.5 3.5 L304.5 3.5" fill="none" stroke="#7f90aa" stroke-width="1"/>
<path d="M291 18.5 L304.5 3.5 L338 3.5 L323.5 18.5 Z" fill="url(#tg)" stroke="#7f90aa" stroke-width="1"/>
<path d="M323.5 18.5 L338 3.5 L720 3.5" fill="none" stroke="#7f90aa" stroke-width="1"/>
<defs><linearGradient id="bg2" x1="0" y1="0" x2="0" y2="1"><stop offset="0" stop-color="#c2d4ee"/><stop offset="1" stop-color="#93aedb"/></linearGradient></defs><path d="M338 4 L720 4 L720 18 L324 18 Z" fill="url(#bg2)"/>
<path d="M157 18 L161 18 L158 15 Z" fill="#b0b8c4"/>
</svg>
<div style="left:0px;top:828px;width:704px;height:1px;background:#6577a0"></div>
<div class="sans" style="left:55px;top:813px;width:110px;height:18px;line-height:18px;font-size:12.5px;font-weight:bold;color:#1f3a64">Общий ЛенВМБ</div>
<div class="sans" style="left:175px;top:813px;width:120px;height:18px;line-height:18px;font-size:12.1px;color:#2f4c80">Лимитный ЛенВМБ</div>
<svg style="left:304px;top:813px;width:20px;height:15px" width="20" height="15"><path d="M6.5 4.5 H15.5 V11.5 Q14 13.5 12 12 Q10 13.5 8 12.5 Q6.5 12 6.5 10 Z" fill="#eef2f8" stroke="#46566e"/><g stroke="#f2a81d" stroke-width="1"><path d="M2.5 1.5 L7.5 6.5 M7.5 1.5 L2.5 6.5 M5 0.5 V7.5 M1.5 4 H8.5"/></g><circle cx="5" cy="4" r="1.5" fill="#fff2a0"/></svg>
<div style="left:704px;top:813px;width:390px;height:16px;background:#8e9fb8"></div>
<div style="left:704px;top:814px;width:7px;height:14px;background:linear-gradient(#ffffff,#dfe6f0);border:1px solid #8796ad"></div>
<div style="left:707px;top:817px;width:1px;height:8px;background:#6d7c92"></div>
<div style="left:711px;top:814px;width:115px;height:14px;background:linear-gradient(#8fa9d8,#7290c6 60%,#7b98cc)"></div>
<svg style="left:714px;top:815px;width:10px;height:12px" width="10" height="12"><path d="M2.5 6 L7.5 1.5 L7.5 10.5 Z" fill="#3b4f78"/></svg>
<div style="left:825px;top:814px;width:275px;height:14px;background:linear-gradient(#f6f8fb,#e6ecf3 50%,#c3cfe0);border:1px solid #8f9db2;border-bottom-color:#6f88b5;border-radius:2px"></div>
<div style="left:989px;top:819px;width:1px;height:7px;background:#6e7d93"></div>
<div style="left:991px;top:819px;width:1px;height:7px;background:#6e7d93"></div>
<div style="left:993px;top:819px;width:1px;height:7px;background:#6e7d93"></div>
<div style="left:995px;top:819px;width:1px;height:7px;background:#6e7d93"></div>
<div style="left:704px;top:828px;width:390px;height:1px;background:#5c6e96"></div>
<div style="left:0px;top:829px;width:1094px;height:22px;background:linear-gradient(#ffffff,#ffffff 1px,#dce8f8 2px,#c9dbf3 35%,#bcd2f1 50%,#c8daf3 70%,#d8e5f6)"></div>
<div style="left:0px;top:851px;width:1094px;height:1px;background:#56667f"></div>
<div style="left:0px;top:852px;width:1094px;height:2px;background:#98a8bf"></div>
<div class="sans" style="left:-5px;top:830px;width:40px;height:21px;line-height:21px;font-size:11.3px;color:#1c3566;letter-spacing:0.7px;-webkit-text-stroke:0.15px #1c3566">отово</div>
<div style="left:35px;top:831px;width:1px;height:20px;background:#97a9c3"></div>
<div style="left:36px;top:831px;width:1px;height:20px;background:#f0f5fb"></div>
<div style="left:940px;top:831px;width:1px;height:20px;background:#8fa2bd"></div>
<div style="left:941px;top:831px;width:1px;height:20px;background:#f0f5fb"></div>
<div style="left:946px;top:832px;width:57px;height:17px;background:linear-gradient(#e6eef8,#c9d9ef);border:1px solid #a9bbd4;border-radius:3px"></div>
<div style="left:947px;top:833px;width:18px;height:15px;background:linear-gradient(#fff1cc,#fbd98f 55%,#f7c667);border-radius:2px"></div>
<svg style="left:946px;top:832px;width:57px;height:17px" width="57" height="17"><g fill="none" stroke="#5e6b7e"><rect x="4.5" y="3.5" width="12" height="10" fill="#fff"/><path d="M4.5 6.5 H16.5 M4.5 10 H16.5 M8.5 3.5 V13.5 M12.5 3.5 V13.5"/><rect x="22.5" y="3.5" width="12" height="10" fill="#c7ced8"/><rect x="25.5" y="5.5" width="6" height="6" fill="#f4f6f9"/><rect x="41.5" y="3.5" width="12" height="10" fill="#b4bcc7"/><rect x="43.5" y="3.5" width="3" height="6" fill="#fff"/><rect x="48.5" y="3.5" width="3" height="6" fill="#fff"/></g></svg>
<div class="sans" style="left:1010px;top:830px;width:40px;height:21px;line-height:21px;font-size:11px;color:#1c3a78">100%</div>
<div style="left:1047px;top:831px;width:17px;height:17px;border-radius:50%;background:radial-gradient(circle at 50% 30%,#ffffff,#dde5ef 60%,#b9c6d8);border:1px solid #56657d"></div>
<div style="left:1051px;top:839px;width:9px;height:2px;background:#3a475a"></div>
<div style="left:1064px;top:839px;width:30px;height:1px;background:#8a9bb5"></div>
<div style="left:1064px;top:840px;width:30px;height:1px;background:#f3f7fc"></div>
</div></body></html>
